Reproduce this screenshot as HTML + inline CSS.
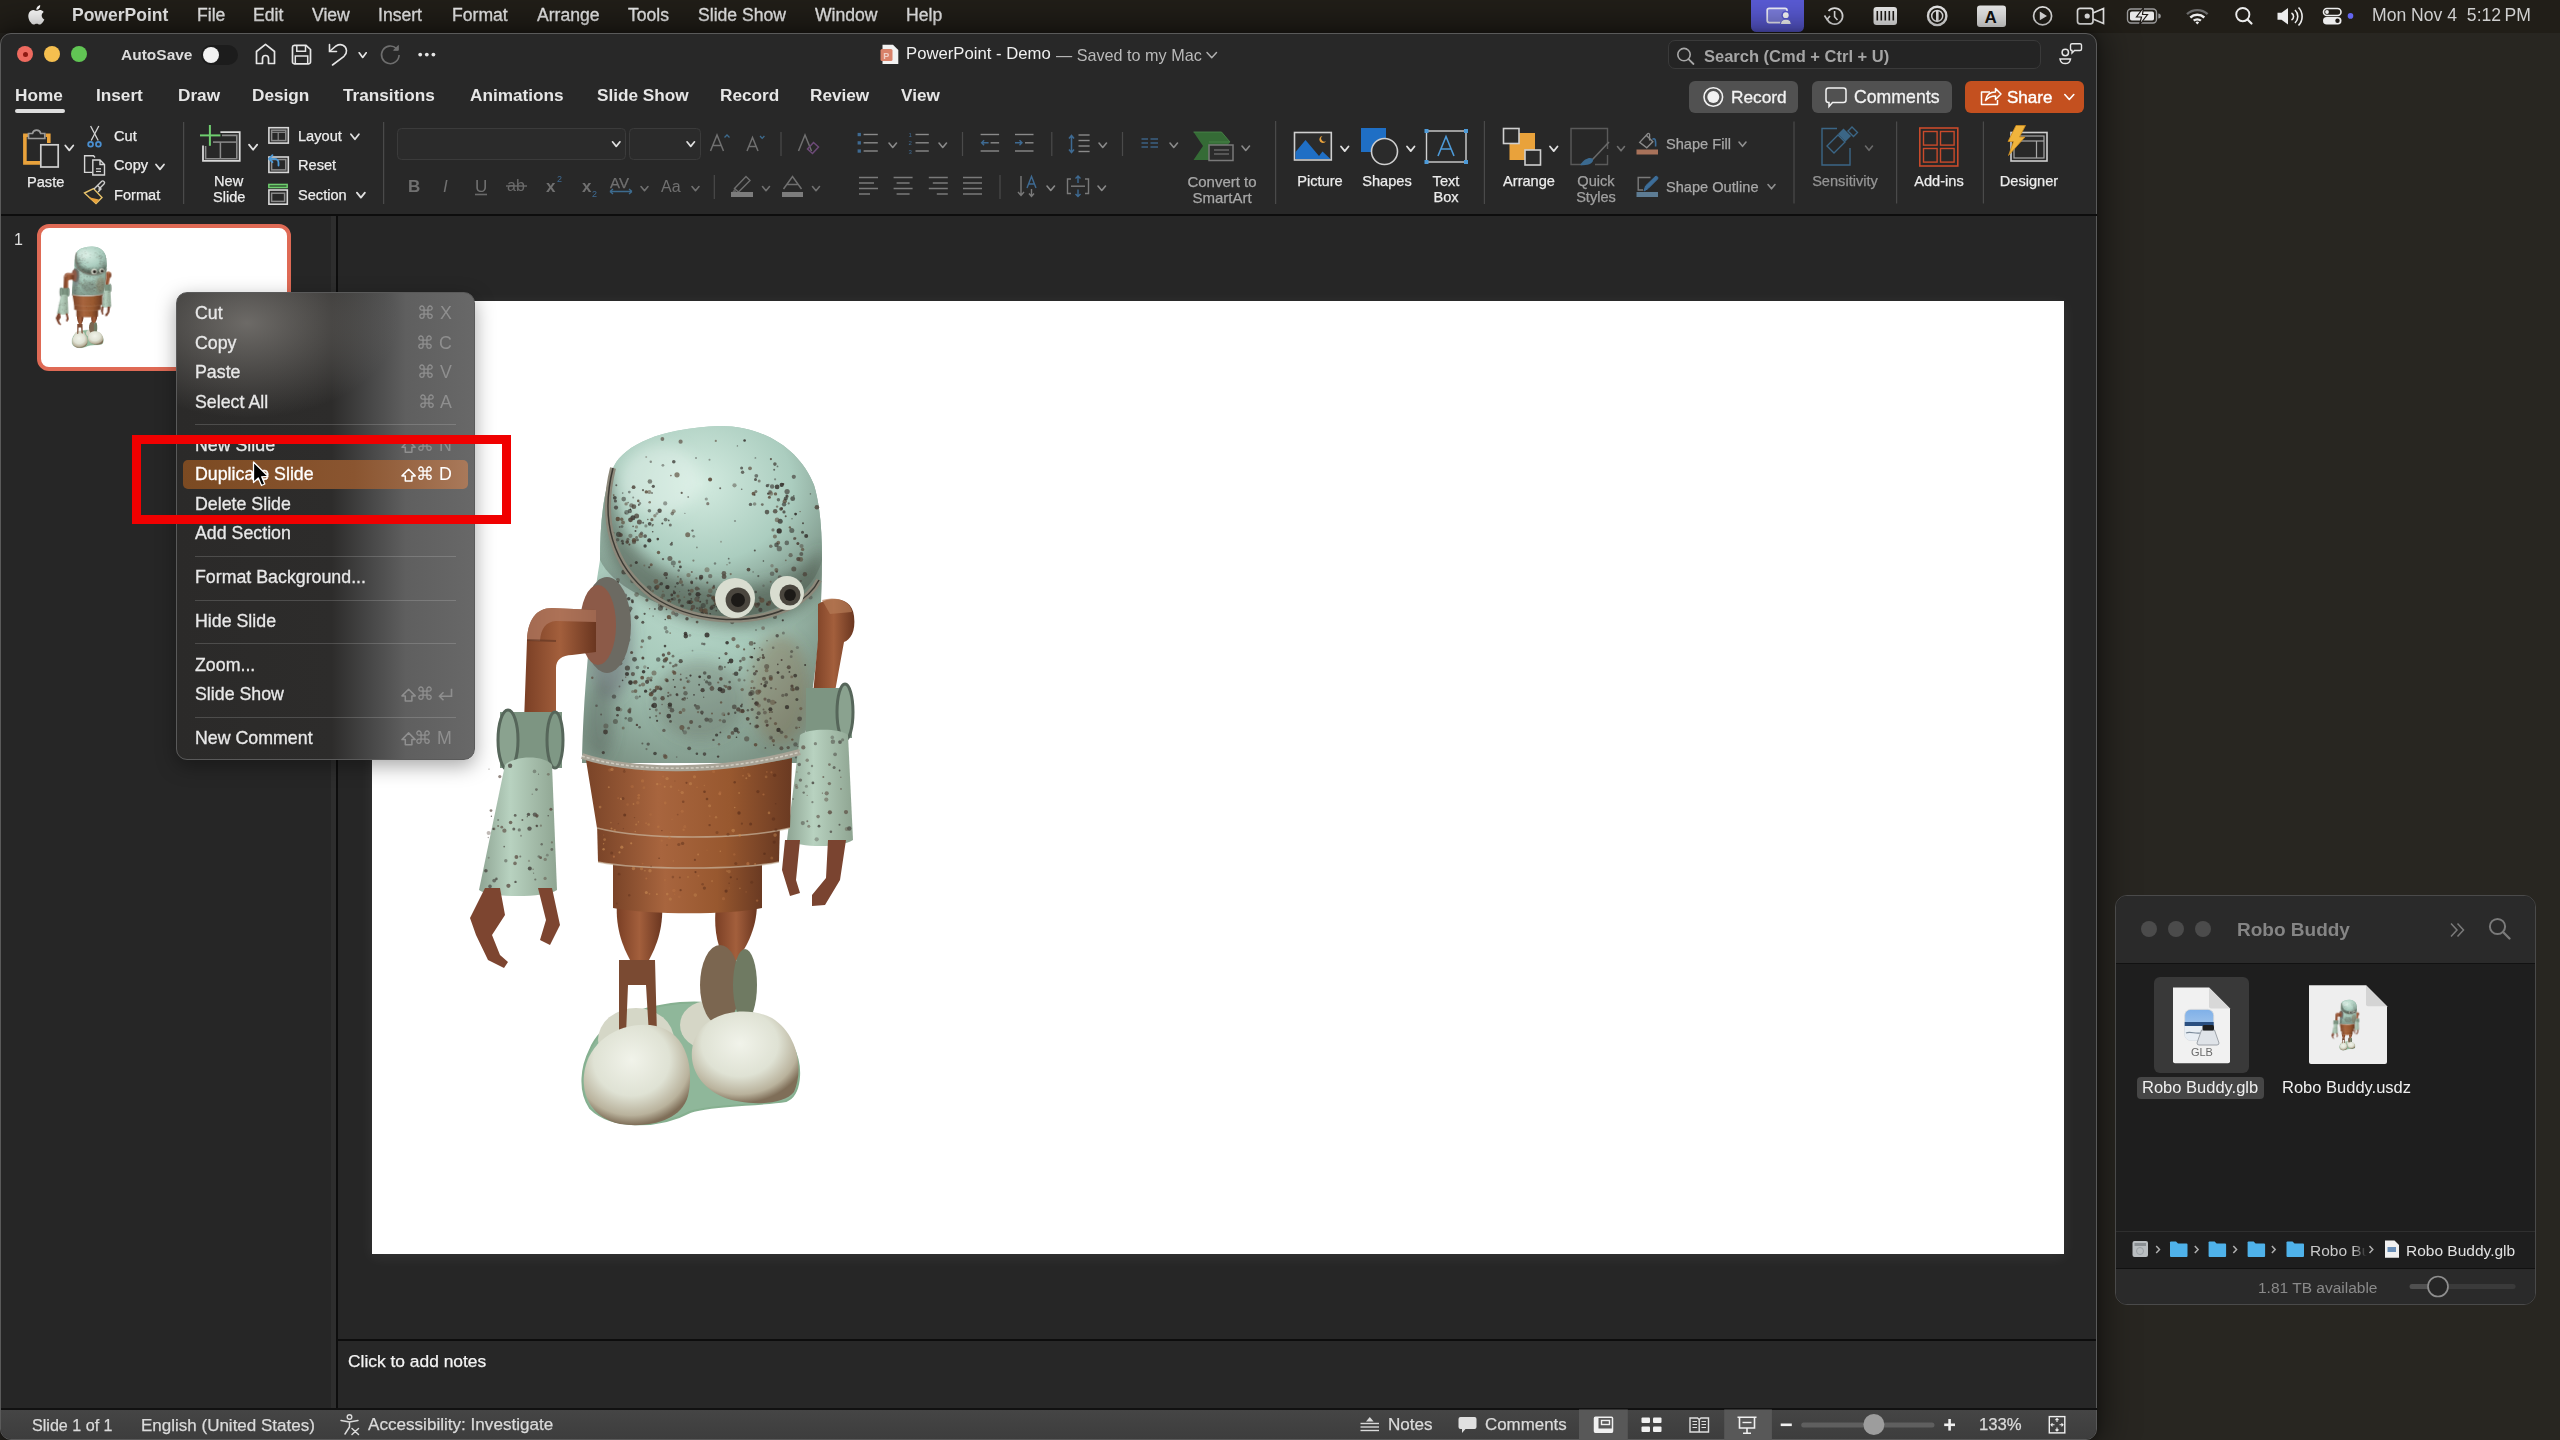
<!DOCTYPE html>
<html><head><meta charset="utf-8"><style>
*{margin:0;padding:0;box-sizing:border-box}
html,body{width:2560px;height:1440px;overflow:hidden}
body{background:#282621;font-family:"Liberation Sans",sans-serif;color:#e6e6e6;position:relative}
.a{position:absolute}
.t{position:absolute;white-space:nowrap;line-height:1;-webkit-font-smoothing:antialiased;will-change:transform}
svg{overflow:visible}
.m{-webkit-text-stroke:0.25px currentColor}
</style></head><body>
<div class="a" style="left:0px;top:0px;width:2560px;height:33px;background:#211e18"></div>
<svg class="a" style="left:0;top:0" width="2560" height="40" viewBox="0 0 2560 40"><path d="M1751 0 H1804 V26.5 A5.5 5.5 0 0 1 1798.5 32 H1756.5 A5.5 5.5 0 0 1 1751 26.5 Z" fill="#5a5bd6"/><rect x="1767.2" y="8.3" width="19.8" height="14.3" rx="2" fill="#7e7fe0" stroke="#f4f4ff" stroke-width="1.7"/><circle cx="1785.8" cy="15.2" r="4.4" fill="#5a5bd6"/><circle cx="1785.8" cy="15.2" r="2.9" fill="#ffffff"/><path d="M1780.5 24.5 C1780.5 20.5 1783 19.3 1785.8 19.3 C1788.6 19.3 1791.2 20.5 1791.2 24.5 Z" fill="#ffffff" stroke="#5a5bd6" stroke-width="1"/><path d="M1827 18.5 A8 8 0 1 0 1828.5 11" fill="none" stroke="#e8e8e8" stroke-width="1.7"/><path d="M1824.5 15.5 L1827 19.5 L1830 16" fill="none" stroke="#e8e8e8" stroke-width="1.6"/><path d="M1834.6 11 V16.8 L1837.5 20" fill="none" stroke="#e8e8e8" stroke-width="1.6"/><rect x="1873.5" y="7" width="23.5" height="18" rx="3" fill="#ececec"/><rect x="1876.5" y="11" width="1.6" height="9.5" fill="#1c1814"/><rect x="1880.5" y="11" width="1.6" height="9.5" fill="#1c1814"/><rect x="1884.5" y="11" width="1.6" height="9.5" fill="#1c1814"/><rect x="1888.5" y="11" width="1.6" height="9.5" fill="#1c1814"/><rect x="1892.5" y="11" width="1.6" height="9.5" fill="#1c1814"/><circle cx="1937.2" cy="15.9" r="9.2" fill="none" stroke="#ececec" stroke-width="2.4"/><circle cx="1937.2" cy="15.9" r="5.5" fill="none" stroke="#ececec" stroke-width="1.5"/><rect x="1936" y="11" width="2.6" height="10" fill="#ececec"/><rect x="1977" y="5.5" width="29" height="21.5" rx="3" fill="#ececec"/><text x="1984.5" y="23.3" font-size="17" font-weight="bold" fill="#111" font-family="Liberation Sans">A</text><circle cx="2042.6" cy="15.9" r="9" fill="none" stroke="#e8e8e8" stroke-width="1.7"/><path d="M2039.8 11.5 V20.3 L2047 15.9 Z" fill="#e8e8e8"/><rect x="2077.5" y="8.3" width="15.5" height="15.5" rx="2.5" fill="none" stroke="#e8e8e8" stroke-width="1.7"/><circle cx="2087.2" cy="16" r="2.6" fill="#e8e8e8"/><path d="M2093 13 L2103.5 8.5 V23.5 L2093 19" fill="none" stroke="#e8e8e8" stroke-width="1.7"/><rect x="2127.5" y="9" width="29" height="14" rx="3.5" fill="none" stroke="#9a9a9a" stroke-width="1.4"/><rect x="2130" y="11.5" width="24" height="9" rx="1.8" fill="#e8e8e8"/><path d="M2158.3 13.5 A2.5 2.5 0 0 1 2158.3 18.5" fill="#9a9a9a"/><path d="M2143.5 7.5 L2136.5 17 H2141.5 L2139.5 25 L2147.5 14.5 H2142.5 Z" fill="#e8e8e8" stroke="#1c1814" stroke-width="1.2"/><path d="M2187 14.2 A15 15 0 0 1 2207.6 14.2" fill="none" stroke="#6a6a6a" stroke-width="2.4"/><path d="M2190.3 17.5 A10.3 10.3 0 0 1 2204.3 17.5" fill="none" stroke="#ececec" stroke-width="2.4"/><path d="M2193.7 20.7 A5.5 5.5 0 0 1 2200.9 20.7" fill="none" stroke="#ececec" stroke-width="2.4"/><path d="M2195.5 22.5 L2197.3 24.5 L2199.1 22.5 A2.5 2.5 0 0 0 2195.5 22.5 Z" fill="#ececec"/><circle cx="2242.8" cy="14.6" r="6.6" fill="none" stroke="#ececec" stroke-width="1.9"/><path d="M2247.5 19.5 L2251.5 23.5" stroke="#ececec" stroke-width="2.2" stroke-linecap="round"/><path d="M2277.5 12.8 H2281.5 L2288 8 V24.5 L2281.5 19.7 H2277.5 Z" fill="#ececec"/><path d="M2291.5 13 A4 4 0 0 1 2291.5 20" fill="none" stroke="#ececec" stroke-width="1.6"/><path d="M2295 10 A9 9 0 0 1 2295 23" fill="none" stroke="#ececec" stroke-width="1.6"/><path d="M2298.5 7.5 A13 13 0 0 1 2298.5 25.5" fill="none" stroke="#ececec" stroke-width="1.6"/><rect x="2323.5" y="8.5" width="17.5" height="7" rx="3.5" fill="none" stroke="#ececec" stroke-width="1.6"/><circle cx="2327" cy="12" r="1.9" fill="#ececec"/><rect x="2323" y="17" width="18.5" height="7.5" rx="3.75" fill="#ececec"/><circle cx="2337.5" cy="20.75" r="2.2" fill="#1c1814"/><circle cx="2350.5" cy="15.9" r="2.8" fill="#6366f1"/><path transform="translate(27.5,4.5) scale(0.95)" fill="#ffffff" d="M14.9 11.7c0-2.6 2.1-3.8 2.2-3.9-1.2-1.8-3.100-2-3.700-2.100-1.600-.200-3.100.900-3.900.900-.800 0-2.100-.900-3.400-.900-1.800 0-3.400 1-4.300 2.600C-.100 11.500 1.200 15.900 3 18.500c.900 1.200 1.900 2.600 3.300 2.600 1.300-.100 1.800-.900 3.400-.900 1.600 0 2 .900 3.400.800 1.400 0 2.300-1.300 3.200-2.500 1-1.400 1.400-2.800 1.400-2.900 0 0-2.700-1-2.800-4.100zM12.300 4.100c.700-.900 1.200-2.100 1.100-3.300-1 0-2.300.700-3 1.600-.700.800-1.300 2-1.100 3.200 1.100.100 2.300-.600 3-1.500z"/></svg>
<div class="t " style="left:72px;top:6.62px;font-size:17.5px;color:#f2f2f2;font-weight:bold;">PowerPoint</div>
<div class="t " style="left:197px;top:6.54px;font-size:17.6px;color:#ececec;-webkit-text-stroke:0.3px #ececec">File</div>
<div class="t " style="left:253px;top:6.54px;font-size:17.6px;color:#ececec;-webkit-text-stroke:0.3px #ececec">Edit</div>
<div class="t " style="left:312px;top:6.54px;font-size:17.6px;color:#ececec;-webkit-text-stroke:0.3px #ececec">View</div>
<div class="t " style="left:378px;top:6.54px;font-size:17.6px;color:#ececec;-webkit-text-stroke:0.3px #ececec">Insert</div>
<div class="t " style="left:452px;top:6.54px;font-size:17.6px;color:#ececec;-webkit-text-stroke:0.3px #ececec">Format</div>
<div class="t " style="left:537px;top:6.54px;font-size:17.6px;color:#ececec;-webkit-text-stroke:0.3px #ececec">Arrange</div>
<div class="t " style="left:628px;top:6.54px;font-size:17.6px;color:#ececec;-webkit-text-stroke:0.3px #ececec">Tools</div>
<div class="t " style="left:698px;top:6.54px;font-size:17.6px;color:#ececec;-webkit-text-stroke:0.3px #ececec">Slide Show</div>
<div class="t " style="left:815px;top:6.54px;font-size:17.6px;color:#ececec;-webkit-text-stroke:0.3px #ececec">Window</div>
<div class="t " style="left:906px;top:6.54px;font-size:17.6px;color:#ececec;-webkit-text-stroke:0.3px #ececec">Help</div>
<div class="t " style="left:2372px;top:6.54px;font-size:17.6px;color:#cfcfcf;">Mon Nov 4&nbsp;&nbsp;5:12&thinsp;PM</div>
<div class="a" style="left:0px;top:33px;width:2097px;height:1407px;background:#282828;border:1px solid #5a5a5a;border-radius:11px;box-shadow:0 0 34px 6px rgba(0,0,0,.5), 0 0 8px rgba(0,0,0,.3)"></div>
<div class="a" style="left:17px;top:46px;width:16px;height:16px;background:#ee6a5f;border-radius:50%;"></div>
<div class="a" style="left:44px;top:46px;width:16px;height:16px;background:#f5bf4f;border-radius:50%;"></div>
<div class="a" style="left:71px;top:46px;width:16px;height:16px;background:#61c554;border-radius:50%;"></div>
<div class="a" style="left:23px;top:52px;width:5px;height:5px;background:#8f1a12;border-radius:50%"></div>
<div class="t " style="left:121px;top:47.33px;font-size:15.5px;color:#dcdcdc;font-weight:bold;">AutoSave</div>
<div class="a" style="left:201px;top:45px;width:37px;height:20px;background:#1c1c1c;border-radius:10px;"></div>
<div class="a" style="left:203px;top:47px;width:16px;height:16px;background:#f2f2f2;border-radius:50%"></div>
<div class="t " style="left:15px;top:86.88px;font-size:17.2px;color:#e6e6e6;font-weight:bold;">Home</div>
<div class="t " style="left:96px;top:86.88px;font-size:17.2px;color:#e6e6e6;font-weight:bold;">Insert</div>
<div class="t " style="left:177.5px;top:86.88px;font-size:17.2px;color:#e6e6e6;font-weight:bold;">Draw</div>
<div class="t " style="left:252px;top:86.88px;font-size:17.2px;color:#e6e6e6;font-weight:bold;">Design</div>
<div class="t " style="left:343px;top:86.88px;font-size:17.2px;color:#e6e6e6;font-weight:bold;">Transitions</div>
<div class="t " style="left:470px;top:86.88px;font-size:17.2px;color:#e6e6e6;font-weight:bold;">Animations</div>
<div class="t " style="left:596.5px;top:86.88px;font-size:17.2px;color:#e6e6e6;font-weight:bold;">Slide Show</div>
<div class="t " style="left:719.5px;top:86.88px;font-size:17.2px;color:#e6e6e6;font-weight:bold;">Record</div>
<div class="t " style="left:810px;top:86.88px;font-size:17.2px;color:#e6e6e6;font-weight:bold;">Review</div>
<div class="t " style="left:900.5px;top:86.88px;font-size:17.2px;color:#e6e6e6;font-weight:bold;">View</div>
<div class="a" style="left:15px;top:109px;width:50px;height:4px;background:#dedede;border-radius:2px"></div>
<svg class="a" style="left:0;top:0" width="2560" height="220" viewBox="0 0 2560 220"><path d="M24.9 135.2 V162.9 H40" fill="none" stroke="#e9a23b" stroke-width="3.6"/><path d="M23.1 135.2 H29 M45.5 135.2 H48.8 V143" fill="none" stroke="#e9a23b" stroke-width="3.6"/><path d="M28.5 138.5 V133.5 H32.5 A4.2 4.2 0 0 1 40.7 133.5 H44.8 V138.5 Z" fill="none" stroke="#9a9a9a" stroke-width="1.7"/><rect x="40.8" y="144.8" width="17.4" height="22.2" rx="0" fill="none" stroke="#cfcfcf" stroke-width="1.7"/><path d="M65.3 145.5 L69.3 150.3 L73.3 145.5" fill="none" stroke="#e0e0e0" stroke-width="1.8" stroke-linecap="round" stroke-linejoin="round"/><path d="M156 164.5 L160.0 169.3 L164 164.5" fill="none" stroke="#e0e0e0" stroke-width="1.8" stroke-linecap="round" stroke-linejoin="round"/><line x1="90.6" y1="126" x2="98.2" y2="140.5" stroke="#d6d6d6" stroke-width="1.3" stroke-linecap="butt"/><line x1="98.8" y1="126" x2="91.2" y2="140.5" stroke="#d6d6d6" stroke-width="1.3" stroke-linecap="butt"/><circle cx="90.6" cy="144.2" r="2.4" fill="none" stroke="#4a8fd0" stroke-width="1.8"/><circle cx="98.4" cy="144.2" r="2.4" fill="none" stroke="#4a8fd0" stroke-width="1.8"/><path d="M92.5 172.4 H84.6 V155.8 H93.5 L95 157.5" fill="none" stroke="#d6d6d6" stroke-width="1.4"/><path d="M92.8 160 H100 L104.5 164.5 V175 H92.8 Z M100 160 V164.5 H104.5" fill="none" stroke="#d6d6d6" stroke-width="1.4"/><line x1="96" y1="168.8" x2="101" y2="168.8" stroke="#d6d6d6" stroke-width="1.2" stroke-linecap="butt"/><line x1="96" y1="171.5" x2="101" y2="171.5" stroke="#d6d6d6" stroke-width="1.2" stroke-linecap="butt"/><path d="M84.5 193 L93.5 188.5 L102 197.5 L96 203.5 Z" fill="none" stroke="#e8c46c" stroke-width="1.4"/><path d="M88 197 L99 199.5 L96 203.5 Z" fill="#e9a23b"/><path d="M94 189 L97.5 185.5 L101 189 L98 192 M96 187 L101.5 181.5 A1.5 1.5 0 0 1 104 184 L98.5 189.5" fill="none" stroke="#cfcfcf" stroke-width="1.4"/><line x1="183.6" y1="122" x2="183.6" y2="204" stroke="#4a4a4a" stroke-width="1.2" stroke-linecap="butt"/><path d="M220.4 132.1 H239.7 V160.9 H203 V145.5" fill="none" stroke="#d8d8d8" stroke-width="1.8"/><path d="M222 135.4 H236.8 V158.7 H205.6 V146" fill="none" stroke="#8c8c8c" stroke-width="1.6"/><line x1="213" y1="142.1" x2="236" y2="142.1" stroke="#8c8c8c" stroke-width="1.5" stroke-linecap="butt"/><line x1="220.4" y1="142.1" x2="220.4" y2="158" stroke="#8c8c8c" stroke-width="1.5" stroke-linecap="butt"/><line x1="209.9" y1="125" x2="209.9" y2="145.8" stroke="#6fcf6f" stroke-width="2" stroke-linecap="butt"/><line x1="200" y1="135.4" x2="220.4" y2="135.4" stroke="#6fcf6f" stroke-width="2" stroke-linecap="butt"/><path d="M249 144.6 L253.1 149.79999999999998 L257.2 144.6" fill="none" stroke="#e0e0e0" stroke-width="1.8" stroke-linecap="round" stroke-linejoin="round"/><rect x="268.9" y="127.7" width="19.4" height="15.4" rx="0" fill="none" stroke="#d8d8d8" stroke-width="1.6"/><rect x="271.6" y="130.2" width="14.2" height="10.4" rx="0" fill="none" stroke="#8c8c8c" stroke-width="1.5"/><line x1="271.6" y1="132.3" x2="285.8" y2="132.3" stroke="#8c8c8c" stroke-width="1.2" stroke-linecap="butt"/><line x1="278.2" y1="132.3" x2="278.2" y2="140.6" stroke="#8c8c8c" stroke-width="1.2" stroke-linecap="butt"/><path d="M350.9 134.3 L354.9 139.3 L358.9 134.3" fill="none" stroke="#e0e0e0" stroke-width="1.8" stroke-linecap="round" stroke-linejoin="round"/><rect x="268.9" y="157" width="19.4" height="15.4" rx="0" fill="none" stroke="#d8d8d8" stroke-width="1.6"/><rect x="271.6" y="159.5" width="14.2" height="10.4" rx="0" fill="none" stroke="#8c8c8c" stroke-width="1.5"/><path d="M269 158.8 L272.5 155.2 M269 158.8 L272.5 162.2 M269 158.8 H274.5 A4 4 0 0 1 278.5 162.8 V165.5" fill="none" stroke="#4d9ad8" stroke-width="1.8" stroke-linecap="round"/><rect x="268.8" y="184.4" width="18.4" height="3.2" rx="0" fill="#3c6a3c" stroke="#6fcf6f" stroke-width="1.4"/><rect x="268.9" y="190" width="18.4" height="14.2" rx="0" fill="none" stroke="#d8d8d8" stroke-width="1.6"/><rect x="271.6" y="193.2" width="13" height="8.2" rx="0" fill="none" stroke="#8c8c8c" stroke-width="1.5"/><path d="M356.9 192.6 L360.9 197.6 L364.9 192.6" fill="none" stroke="#e0e0e0" stroke-width="1.8" stroke-linecap="round" stroke-linejoin="round"/><line x1="383.6" y1="122" x2="383.6" y2="204" stroke="#4a4a4a" stroke-width="1.2" stroke-linecap="butt"/><rect x="397.5" y="128.5" width="228" height="31" rx="4" fill="#2b2b2b" stroke="#3b3b3b" stroke-width="1"/><path d="M612.5 141.8 L616.25 146.4 L620.0 141.8" fill="none" stroke="#e0e0e0" stroke-width="1.7" stroke-linecap="round" stroke-linejoin="round"/><rect x="629.5" y="128.5" width="71" height="31" rx="4" fill="#2b2b2b" stroke="#3b3b3b" stroke-width="1"/><path d="M687 141.8 L690.75 146.4 L694.5 141.8" fill="none" stroke="#e0e0e0" stroke-width="1.7" stroke-linecap="round" stroke-linejoin="round"/><path d="M710.5 151 L717 135 L723.5 151 M712.8 145.5 H721.3" fill="none" stroke="#707070" stroke-width="1.5"/><path d="M724.5 137.5 L727 135 L729.5 137.5" fill="none" stroke="#3d6b8e" stroke-width="1.3"/><path d="M747 151 L752.5 137.5 L758 151 M749 146.5 H756" fill="none" stroke="#707070" stroke-width="1.5"/><path d="M760 136 L762.2 138.4 L764.4 136" fill="none" stroke="#3d6b8e" stroke-width="1.3"/><line x1="781" y1="132" x2="781" y2="156" stroke="#4a4a4a" stroke-width="1.2" stroke-linecap="butt"/><path d="M798.5 151 L805 135 L811.5 151" fill="none" stroke="#707070" stroke-width="1.5"/><path d="M807.5 149 L813.5 142.5 L818.5 147 L812.5 153.5 Z" fill="none" stroke="#6d4a78" stroke-width="1.5"/><line x1="714.3" y1="175" x2="714.3" y2="199" stroke="#4a4a4a" stroke-width="1.2" stroke-linecap="butt"/><path d="M734.5 188.5 L746 176.5 L750 180.5 L738.5 192 Z" fill="none" stroke="#6e6e6e" stroke-width="1.4"/><path d="M734.5 188.5 L732 192.5 L736.5 192" fill="#5e5e5e"/><rect x="731" y="192" width="22" height="5" fill="#7c7c7c"/><path d="M762.5 186.5 L766.0 190.7 L769.5 186.5" fill="none" stroke="#707070" stroke-width="1.6" stroke-linecap="round" stroke-linejoin="round"/><path d="M783.5 189 L792.5 176.5 L801.5 189 M787 184.5 H798" fill="none" stroke="#707070" stroke-width="1.5"/><rect x="782" y="192" width="21" height="5" fill="#7c7c7c"/><path d="M812.5 186.5 L816.0 190.7 L819.5 186.5" fill="none" stroke="#707070" stroke-width="1.6" stroke-linecap="round" stroke-linejoin="round"/><path d="M641 186.5 L644.5 190.7 L648 186.5" fill="none" stroke="#707070" stroke-width="1.6" stroke-linecap="round" stroke-linejoin="round"/><path d="M692 186.5 L695.5 190.7 L699 186.5" fill="none" stroke="#707070" stroke-width="1.6" stroke-linecap="round" stroke-linejoin="round"/><path d="M610 191.5 H632 M610 191.5 L613 189 M610 191.5 L613 194 M632 191.5 L629 189 M632 191.5 L629 194" fill="none" stroke="#3d6b8e" stroke-width="1.4"/><line x1="506" y1="186" x2="527" y2="186" stroke="#6a6a6a" stroke-width="1.4" stroke-linecap="butt"/><line x1="475" y1="194.5" x2="487" y2="194.5" stroke="#6a6a6a" stroke-width="1.6" stroke-linecap="butt"/><rect x="857.6" y="132.9" width="3.3" height="3.3" fill="#3e6a92"/><line x1="863.6" y1="134.5" x2="877.8000000000001" y2="134.5" stroke="#8a8a8a" stroke-width="1.4" stroke-linecap="butt"/><rect x="857.6" y="141.20000000000002" width="3.3" height="3.3" fill="#3e6a92"/><line x1="863.6" y1="142.8" x2="877.8000000000001" y2="142.8" stroke="#8a8a8a" stroke-width="1.4" stroke-linecap="butt"/><rect x="857.6" y="149.4" width="3.3" height="3.3" fill="#3e6a92"/><line x1="863.6" y1="151" x2="877.8000000000001" y2="151" stroke="#8a8a8a" stroke-width="1.4" stroke-linecap="butt"/><path d="M889 143 L892.75 147.5 L896.5 143" fill="none" stroke="#8a8a8a" stroke-width="1.6" stroke-linecap="round" stroke-linejoin="round"/><line x1="915.5" y1="134.5" x2="928.8" y2="134.5" stroke="#8a8a8a" stroke-width="1.4" stroke-linecap="butt"/><line x1="915.5" y1="142.8" x2="928.8" y2="142.8" stroke="#8a8a8a" stroke-width="1.4" stroke-linecap="butt"/><line x1="915.5" y1="151" x2="928.8" y2="151" stroke="#8a8a8a" stroke-width="1.4" stroke-linecap="butt"/><text x="908.5" y="137" font-size="6" fill="#3e6a92" font-family="Liberation Sans">1</text><text x="908.5" y="145" font-size="6" fill="#3e6a92" font-family="Liberation Sans">2</text><text x="908.5" y="153.5" font-size="6" fill="#3e6a92" font-family="Liberation Sans">3</text><path d="M939 143 L942.75 147.5 L946.5 143" fill="none" stroke="#8a8a8a" stroke-width="1.6" stroke-linecap="round" stroke-linejoin="round"/><line x1="962.5" y1="132" x2="962.5" y2="156" stroke="#4a4a4a" stroke-width="1.2" stroke-linecap="butt"/><line x1="980.6" y1="134.5" x2="999.1" y2="134.5" stroke="#8a8a8a" stroke-width="1.4" stroke-linecap="butt"/><line x1="990.6" y1="142.8" x2="999.1" y2="142.8" stroke="#8a8a8a" stroke-width="1.4" stroke-linecap="butt"/><line x1="980.6" y1="151" x2="999.1" y2="151" stroke="#8a8a8a" stroke-width="1.4" stroke-linecap="butt"/><path d="M988.6 142.8 H981.6 M984.1 140.3 L981.6 142.8 L984.1 145.3" fill="none" stroke="#3e6a92" stroke-width="1.4"/><line x1="1015" y1="134.5" x2="1033.5" y2="134.5" stroke="#8a8a8a" stroke-width="1.4" stroke-linecap="butt"/><line x1="1025" y1="142.8" x2="1033.5" y2="142.8" stroke="#8a8a8a" stroke-width="1.4" stroke-linecap="butt"/><line x1="1015" y1="151" x2="1033.5" y2="151" stroke="#8a8a8a" stroke-width="1.4" stroke-linecap="butt"/><path d="M1015 142.8 H1022 M1019.5 140.3 L1022 142.8 L1019.5 145.3" fill="none" stroke="#3e6a92" stroke-width="1.4"/><line x1="1051.8" y1="132" x2="1051.8" y2="156" stroke="#4a4a4a" stroke-width="1.2" stroke-linecap="butt"/><path d="M1071.5 136 V152 M1069 138.5 L1071.5 135.5 L1074 138.5 M1069 149.5 L1071.5 152.5 L1074 149.5" fill="none" stroke="#3e6a92" stroke-width="1.5"/><line x1="1078.5" y1="135" x2="1089.6" y2="135" stroke="#8a8a8a" stroke-width="1.4" stroke-linecap="butt"/><line x1="1078.5" y1="140.5" x2="1089.6" y2="140.5" stroke="#8a8a8a" stroke-width="1.4" stroke-linecap="butt"/><line x1="1078.5" y1="146" x2="1089.6" y2="146" stroke="#8a8a8a" stroke-width="1.4" stroke-linecap="butt"/><line x1="1078.5" y1="151.5" x2="1089.6" y2="151.5" stroke="#8a8a8a" stroke-width="1.4" stroke-linecap="butt"/><path d="M1099 143 L1102.75 147.5 L1106.5 143" fill="none" stroke="#8a8a8a" stroke-width="1.6" stroke-linecap="round" stroke-linejoin="round"/><line x1="1122.5" y1="132" x2="1122.5" y2="156" stroke="#4a4a4a" stroke-width="1.2" stroke-linecap="butt"/><line x1="1141.5" y1="139" x2="1148" y2="139" stroke="#3e6a92" stroke-width="1.3" stroke-linecap="butt"/><line x1="1150.5" y1="139" x2="1158" y2="139" stroke="#3e6a92" stroke-width="1.3" stroke-linecap="butt"/><line x1="1141.5" y1="143" x2="1148" y2="143" stroke="#3e6a92" stroke-width="1.3" stroke-linecap="butt"/><line x1="1150.5" y1="143" x2="1158" y2="143" stroke="#3e6a92" stroke-width="1.3" stroke-linecap="butt"/><line x1="1141.5" y1="147" x2="1148" y2="147" stroke="#3e6a92" stroke-width="1.3" stroke-linecap="butt"/><line x1="1150.5" y1="147" x2="1158" y2="147" stroke="#3e6a92" stroke-width="1.3" stroke-linecap="butt"/><path d="M1170 143 L1173.75 147.5 L1177.5 143" fill="none" stroke="#8a8a8a" stroke-width="1.6" stroke-linecap="round" stroke-linejoin="round"/><path d="M1193.5 132 H1221.5 L1230 142 L1228 145 H1209 V160 L1204 160 L1193.5 160 L1203 146 Z" fill="#356b36"/><path d="M1193.5 132 H1221.5 L1230 142 H1209" fill="none" stroke="#4b8a4b" stroke-width="0.8"/><rect x="1209" y="145" width="24" height="15.5" rx="0" fill="#2b2b2b" stroke="#7a7a7a" stroke-width="1.5"/><line x1="1214" y1="150" x2="1229" y2="150" stroke="#7a7a7a" stroke-width="1.1" stroke-linecap="butt"/><line x1="1214" y1="154" x2="1229" y2="154" stroke="#7a7a7a" stroke-width="1.1" stroke-linecap="butt"/><path d="M1242 146 L1245.75 150.5 L1249.5 146" fill="none" stroke="#8a8a8a" stroke-width="1.6" stroke-linecap="round" stroke-linejoin="round"/><line x1="1275.6" y1="121" x2="1275.6" y2="204" stroke="#4a4a4a" stroke-width="1.2" stroke-linecap="butt"/><line x1="859" y1="177.5" x2="878" y2="177.5" stroke="#7a7a7a" stroke-width="1.5" stroke-linecap="butt"/><line x1="859" y1="183" x2="874" y2="183" stroke="#7a7a7a" stroke-width="1.5" stroke-linecap="butt"/><line x1="859" y1="188.5" x2="878" y2="188.5" stroke="#7a7a7a" stroke-width="1.5" stroke-linecap="butt"/><line x1="859" y1="194" x2="870" y2="194" stroke="#7a7a7a" stroke-width="1.5" stroke-linecap="butt"/><line x1="893.6" y1="177.5" x2="912.6" y2="177.5" stroke="#7a7a7a" stroke-width="1.5" stroke-linecap="butt"/><line x1="896.6" y1="183" x2="909.6" y2="183" stroke="#7a7a7a" stroke-width="1.5" stroke-linecap="butt"/><line x1="893.6" y1="188.5" x2="912.6" y2="188.5" stroke="#7a7a7a" stroke-width="1.5" stroke-linecap="butt"/><line x1="896.6" y1="194" x2="909.6" y2="194" stroke="#7a7a7a" stroke-width="1.5" stroke-linecap="butt"/><line x1="928.8" y1="177.5" x2="947.8" y2="177.5" stroke="#7a7a7a" stroke-width="1.5" stroke-linecap="butt"/><line x1="932.8" y1="183" x2="947.8" y2="183" stroke="#7a7a7a" stroke-width="1.5" stroke-linecap="butt"/><line x1="928.8" y1="188.5" x2="947.8" y2="188.5" stroke="#7a7a7a" stroke-width="1.5" stroke-linecap="butt"/><line x1="936.8" y1="194" x2="947.8" y2="194" stroke="#7a7a7a" stroke-width="1.5" stroke-linecap="butt"/><line x1="963" y1="177.5" x2="982" y2="177.5" stroke="#7a7a7a" stroke-width="1.5" stroke-linecap="butt"/><line x1="963" y1="183" x2="982" y2="183" stroke="#7a7a7a" stroke-width="1.5" stroke-linecap="butt"/><line x1="963" y1="188.5" x2="982" y2="188.5" stroke="#7a7a7a" stroke-width="1.5" stroke-linecap="butt"/><line x1="963" y1="194" x2="982" y2="194" stroke="#7a7a7a" stroke-width="1.5" stroke-linecap="butt"/><line x1="1000" y1="175" x2="1000" y2="199" stroke="#4a4a4a" stroke-width="1.2" stroke-linecap="butt"/><path d="M1021 176 V195 M1018 192 L1021 195.5 L1024 192" fill="none" stroke="#7a7a7a" stroke-width="1.4"/><path d="M1027 188 L1031.5 176.5 L1036 188 M1028.5 184 H1034.5" fill="none" stroke="#3e6a92" stroke-width="1.4"/><path d="M1031.5 189 V196 M1029 193.5 L1031.5 196.5 L1034 193.5" fill="none" stroke="#7a7a7a" stroke-width="1.4"/><path d="M1047 186 L1050.75 190.5 L1054.5 186" fill="none" stroke="#8a8a8a" stroke-width="1.6" stroke-linecap="round" stroke-linejoin="round"/><path d="M1071 179 H1067.5 V193.5 H1071 M1085 179 H1088.5 V193.5 H1085" fill="none" stroke="#7a7a7a" stroke-width="1.4"/><line x1="1071" y1="186.2" x2="1085" y2="186.2" stroke="#7a7a7a" stroke-width="1.4" stroke-linecap="butt"/><path d="M1078 176 V183 M1075.5 178.5 L1078 176 L1080.5 178.5 M1078 189.5 V196.5 M1075.5 194 L1078 196.5 L1080.5 194" fill="none" stroke="#3e6a92" stroke-width="1.4"/><path d="M1098 186 L1101.75 190.5 L1105.5 186" fill="none" stroke="#8a8a8a" stroke-width="1.6" stroke-linecap="round" stroke-linejoin="round"/><rect x="1294.5" y="132.5" width="36.8" height="27.5" rx="0" fill="#2b2b2b" stroke="#cfcfcf" stroke-width="1.6"/><path d="M1295.5 159 V152 L1305.5 140 L1319 156 L1322.5 151.5 L1330.5 159 Z" fill="#1f6fc5"/><path d="M1322.5 136 A3.5 3.5 0 1 0 1326 141 A3 3 0 0 1 1322.5 136 Z" fill="#e9a23b"/><path d="M1341 146.5 L1344.75 151.1 L1348.5 146.5" fill="none" stroke="#e0e0e0" stroke-width="1.8" stroke-linecap="round" stroke-linejoin="round"/><rect x="1361" y="128" width="25" height="24" fill="#1f6fc5"/><circle cx="1384.5" cy="151.5" r="13" fill="#2b2b2b" stroke="#cfcfcf" stroke-width="1.6"/><path d="M1407 146.5 L1410.75 151.1 L1414.5 146.5" fill="none" stroke="#e0e0e0" stroke-width="1.8" stroke-linecap="round" stroke-linejoin="round"/><rect x="1426.5" y="131" width="39.5" height="31" rx="0" fill="none" stroke="#cfcfcf" stroke-width="1.4"/><rect x="1424.5" y="129" width="4" height="4" fill="#4d9ad8"/><rect x="1464" y="129" width="4" height="4" fill="#4d9ad8"/><rect x="1424.5" y="160" width="4" height="4" fill="#4d9ad8"/><rect x="1464" y="160" width="4" height="4" fill="#4d9ad8"/><path d="M1438 156 L1446 136.5 L1454 156 M1441 149 H1451" fill="none" stroke="#4d9ad8" stroke-width="1.6"/><line x1="1484.4" y1="121" x2="1484.4" y2="204" stroke="#4a4a4a" stroke-width="1.2" stroke-linecap="butt"/><rect x="1509.5" y="133" width="25.5" height="27" fill="#e9a23b"/><rect x="1503.5" y="128.5" width="15.5" height="15" rx="0" fill="#2b2b2b" stroke="#cfcfcf" stroke-width="1.6"/><rect x="1525" y="150" width="15.5" height="15" rx="0" fill="#2b2b2b" stroke="#cfcfcf" stroke-width="1.6"/><path d="M1550 146.5 L1553.75 151.1 L1557.5 146.5" fill="none" stroke="#e0e0e0" stroke-width="1.8" stroke-linecap="round" stroke-linejoin="round"/><path d="M1571 149 V128.5 H1607.5 V149 M1571 149 V164.5 H1582" fill="none" stroke="#5a5a5a" stroke-width="1.4"/><path d="M1607.5 155 V164.5 H1595" fill="none" stroke="#5a5a5a" stroke-width="1.4"/><path d="M1609 142 L1592 160" stroke="#6a6a6a" stroke-width="1.6"/><path d="M1580 165 C1585 158 1590 157 1593 159 C1594 163 1588 166 1580 165Z" fill="#3b6a90"/><path d="M1617.5 146.5 L1621.0 150.8 L1624.5 146.5" fill="none" stroke="#707070" stroke-width="1.6" stroke-linecap="round" stroke-linejoin="round"/><path d="M1639.7 142.4 L1646.3 135.2 L1652.8 141.8 L1646.8 147.8 Z" fill="none" stroke="#8a8a8a" stroke-width="1.4"/><path d="M1646.3 135.2 L1647.8 133.6 A1.2 1.2 0 0 1 1649.6 134.3 V140.5" fill="none" stroke="#8a8a8a" stroke-width="1.3"/><path d="M1652.5 139.5 C1654.5 137.5 1656 139 1655.6 146.5" fill="none" stroke="#3d6e9a" stroke-width="1.6"/><rect x="1636.5" y="149.5" width="21.5" height="5" fill="#a8725a"/><path d="M1739 142 L1742.5 146.3 L1746 142" fill="none" stroke="#909090" stroke-width="1.6" stroke-linecap="round" stroke-linejoin="round"/><path d="M1643 190 H1638.2 V177.5 H1650.5" fill="none" stroke="#7a7a7a" stroke-width="1.4"/><path d="M1644 191 L1645.5 186 L1655 176.8 A1.6 1.6 0 0 1 1657.4 179.2 L1648 188.6 Z" fill="#3d6e9a" stroke="#3d6e9a" stroke-width="1"/><rect x="1636.5" y="192" width="21.5" height="5" fill="#5d7c94"/><path d="M1768 184.5 L1771.5 188.8 L1775 184.5" fill="none" stroke="#909090" stroke-width="1.6" stroke-linecap="round" stroke-linejoin="round"/><line x1="1794" y1="121.5" x2="1794" y2="203.5" stroke="#4a4a4a" stroke-width="1.2" stroke-linecap="butt"/><path d="M1837 128.5 H1822 V165 H1850 V148" fill="none" stroke="#3b6686" stroke-width="1.4"/><path d="M1827 146 L1838 135 L1845 142 L1834 153 Z" fill="none" stroke="#3b6686" stroke-width="1.4"/><path d="M1838 134 L1843.5 128.5 L1851 136 L1845.5 141.5 Z" fill="#3b6686"/><path d="M1848 131 L1852 127 L1857.5 132.5 L1853.5 136.5 Z" fill="none" stroke="#3b6686" stroke-width="1.4"/><path d="M1865.5 146 L1869.0 150.3 L1872.5 146" fill="none" stroke="#6a6a6a" stroke-width="1.6" stroke-linecap="round" stroke-linejoin="round"/><line x1="1896.6" y1="121.5" x2="1896.6" y2="203.5" stroke="#4a4a4a" stroke-width="1.2" stroke-linecap="butt"/><rect x="1919.8" y="128" width="38" height="38" rx="0" fill="none" stroke="#c94a2b" stroke-width="1.6"/><rect x="1923.5" y="131.5" width="13.6" height="13.6" rx="0" fill="none" stroke="#c94a2b" stroke-width="1.4"/><rect x="1940.5" y="131.5" width="13.6" height="13.6" rx="0" fill="none" stroke="#c94a2b" stroke-width="1.4"/><rect x="1923.5" y="148.5" width="13.6" height="13.6" rx="0" fill="none" stroke="#c94a2b" stroke-width="1.4"/><rect x="1940.5" y="148.5" width="13.6" height="13.6" rx="0" fill="none" stroke="#c94a2b" stroke-width="1.4"/><line x1="1983.4" y1="121.5" x2="1983.4" y2="203.5" stroke="#4a4a4a" stroke-width="1.2" stroke-linecap="butt"/><rect x="2011" y="132.5" width="36" height="28.5" rx="0" fill="none" stroke="#cfcfcf" stroke-width="1.6"/><rect x="2014" y="136" width="30" height="22" rx="0" fill="none" stroke="#a8a8a8" stroke-width="1.2"/><line x1="2014" y1="141" x2="2044" y2="141" stroke="#a8a8a8" stroke-width="1.2" stroke-linecap="butt"/><line x1="2036.5" y1="141" x2="2036.5" y2="158" stroke="#a8a8a8" stroke-width="1.2" stroke-linecap="butt"/><path d="M2016 125.5 H2025.5 L2019.5 137 H2025 L2008.5 155.5 L2013.5 141.5 H2008 Z" fill="#f0b43c" stroke="#c98a20" stroke-width="0.8"/></svg>
<div class="t m" style="left:27px;top:174.59px;font-size:14.6px;color:#ececec;">Paste</div>
<div class="t m" style="left:113.7px;top:128.89px;font-size:14.6px;color:#ececec;">Cut</div>
<div class="t m" style="left:113.7px;top:158.19px;font-size:14.6px;color:#ececec;">Copy</div>
<div class="t m" style="left:113.7px;top:187.89px;font-size:14.6px;color:#ececec;">Format</div>
<div class="t m" style="left:214.2px;top:174.39px;font-size:14.6px;color:#ececec;">New</div>
<div class="t m" style="left:212.5px;top:190.09px;font-size:14.6px;color:#ececec;">Slide</div>
<div class="t m" style="left:297.7px;top:128.89px;font-size:14.6px;color:#ececec;">Layout</div>
<div class="t m" style="left:297.7px;top:158.19px;font-size:14.6px;color:#ececec;">Reset</div>
<div class="t m" style="left:297.7px;top:187.89px;font-size:14.6px;color:#ececec;">Section</div>
<div class="t " style="left:407.5px;top:178.05px;font-size:17px;color:#707070;font-weight:bold;">B</div>
<div class="t " style="left:443px;top:178.05px;font-size:17px;color:#707070;"><i>I</i></div>
<div class="t " style="left:475px;top:178.05px;font-size:17px;color:#707070;">U</div>
<div class="t " style="left:506.5px;top:178.40px;font-size:16px;color:#6a6a6a;">ab</div>
<div class="t " style="left:546px;top:178.05px;font-size:17px;color:#707070;font-weight:bold;">x</div>
<div class="t " style="left:557px;top:175.35px;font-size:9px;color:#3e6a92;">2</div>
<div class="t " style="left:582px;top:178.05px;font-size:17px;color:#707070;font-weight:bold;">x</div>
<div class="t " style="left:592px;top:190.35px;font-size:9px;color:#3e6a92;">2</div>
<div class="t m" style="left:609.5px;top:174.75px;font-size:15px;color:#707070;">AV</div>
<div class="t " style="left:661px;top:179.40px;font-size:16px;color:#707070;">Aa</div>
<div class="t m" style="left:922.2px;width:600px;text-align:center;top:173.95px;font-size:15px;color:#a8a8a8;">Convert to</div>
<div class="t m" style="left:922.2px;width:600px;text-align:center;top:189.65px;font-size:15px;color:#a8a8a8;">SmartArt</div>
<div class="t m" style="left:1020px;width:600px;text-align:center;top:174.29px;font-size:14.6px;color:#ececec;">Picture</div>
<div class="t m" style="left:1086.6px;width:600px;text-align:center;top:174.29px;font-size:14.6px;color:#ececec;">Shapes</div>
<div class="t m" style="left:1145.5px;width:600px;text-align:center;top:174.29px;font-size:14.6px;color:#ececec;">Text</div>
<div class="t m" style="left:1145.5px;width:600px;text-align:center;top:189.99px;font-size:14.6px;color:#ececec;">Box</div>
<div class="t m" style="left:1228.7px;width:600px;text-align:center;top:174.29px;font-size:14.6px;color:#ececec;">Arrange</div>
<div class="t m" style="left:1295.5px;width:600px;text-align:center;top:174.29px;font-size:14.6px;color:#a0a0a0;">Quick</div>
<div class="t m" style="left:1295.5px;width:600px;text-align:center;top:189.99px;font-size:14.6px;color:#a0a0a0;">Styles</div>
<div class="t m" style="left:1666px;top:136.89px;font-size:14.6px;color:#a8a8a8;">Shape Fill</div>
<div class="t m" style="left:1666px;top:179.89px;font-size:14.6px;color:#a8a8a8;">Shape Outline</div>
<div class="t m" style="left:1544.5px;width:600px;text-align:center;top:174.09px;font-size:14.6px;color:#959595;">Sensitivity</div>
<div class="t m" style="left:1639.4px;width:600px;text-align:center;top:174.09px;font-size:14.6px;color:#ececec;">Add-ins</div>
<div class="t m" style="left:1729.2px;width:600px;text-align:center;top:174.09px;font-size:14.6px;color:#ececec;">Designer</div>
<div class="a" style="left:1px;top:214px;width:2096px;height:2px;background:#0d0d0d"></div>
<div class="a" style="left:1px;top:216px;width:336px;height:1193px;background:#262626"></div>
<div class="a" style="left:331px;top:216px;width:6px;height:1193px;background:#2e2e2e"></div>
<div class="a" style="left:336px;top:216px;width:2px;height:1193px;background:#0d0d0d"></div>
<div class="a" style="left:338px;top:216px;width:1758px;height:1124px;background:#262626"></div>
<div class="a" style="left:372px;top:301px;width:1692px;height:953px;background:#ffffff;box-shadow:0 3px 14px rgba(255,255,255,.07)"></div>
<svg class="a" style="left:0;top:0" width="2560" height="1440" viewBox="0 0 2560 1440"><defs>
<radialGradient id="rbBody" cx="0.42" cy="0.35" r="0.7">
 <stop offset="0" stop-color="#c2e0d4"/><stop offset="0.55" stop-color="#a8cabb"/><stop offset="1" stop-color="#7d9486"/>
</radialGradient>
<radialGradient id="rbDome" cx="0.45" cy="0.3" r="0.75">
 <stop offset="0" stop-color="#d3ebe0"/><stop offset="0.55" stop-color="#abcdbf"/><stop offset="1" stop-color="#6f8578"/>
</radialGradient>
<linearGradient id="rbRust" x1="0" x2="1" y1="0" y2="0">
 <stop offset="0" stop-color="#7a4428"/><stop offset="0.35" stop-color="#a8653e"/><stop offset="0.7" stop-color="#98582f"/><stop offset="1" stop-color="#6a3a22"/>
</linearGradient>
<linearGradient id="rbRustV" x1="0" x2="1">
 <stop offset="0" stop-color="#7a3f25"/><stop offset="0.5" stop-color="#a35f3c"/><stop offset="1" stop-color="#6a3620"/>
</linearGradient>
<radialGradient id="rbFoot" cx="0.45" cy="0.35" r="0.65">
 <stop offset="0" stop-color="#f1f3ea"/><stop offset="0.55" stop-color="#dfe2d4"/><stop offset="0.85" stop-color="#b9b29c"/><stop offset="1" stop-color="#7f6e58"/>
</radialGradient>
<filter id="rbBlur" x="-20%" y="-20%" width="140%" height="140%"><feGaussianBlur stdDeviation="7"/></filter>
<filter id="rbBlur2" x="-20%" y="-20%" width="140%" height="140%"><feGaussianBlur stdDeviation="2.5"/></filter>
<clipPath id="rbClip"><path d="M582 763 C583 700 590 620 600 560 C600 525 603 490 614 466 C625 445 660 428 720 426 C765 426 800 450 814 485 C820 505 822 530 822 560 C822 640 812 700 800 763 Z"/></clipPath>
<linearGradient id="rbArm" x1="0" x2="1">
 <stop offset="0" stop-color="#8ea493"/><stop offset="0.4" stop-color="#b8d2c0"/><stop offset="1" stop-color="#8fa592"/>
</linearGradient>
</defs><g id="robot"><path d="M590 1050 C600 1025 630 1008 680 1003 C720 1000 770 1010 792 1045 C804 1068 800 1096 786 1101 C755 1106 715 1104 690 1112 C660 1128 612 1130 590 1108 C578 1090 582 1066 590 1050Z" fill="#8fb79a" stroke="#86b090" stroke-width="2"/><ellipse cx="636" cy="1040" rx="38" ry="32" fill="#d5d7c7"/><ellipse cx="708" cy="1025" rx="28" ry="24" fill="#d5d6c6"/><path d="M617 902 L662 902 C664 930 655 950 646 965 L633 965 C624 950 615 930 617 902Z" fill="url(#rbRustV)"/><path d="M619 960 L655 960 L657 1035 L649 1035 L646 985 L628 985 L626 1035 L619 1035Z" fill="#7a4a32"/><path d="M716 903 L757 903 C757 930 745 950 735 962 L725 962 C715 940 714 925 716 903Z" fill="url(#rbRustV)"/><ellipse cx="720" cy="985" rx="20" ry="40" fill="#7b6650"/><ellipse cx="745" cy="985" rx="12" ry="36" fill="#6f7a62"/><path d="M584 1075 C588 1036 628 1020 656 1026 C688 1033 694 1070 688 1096 C681 1122 646 1128 620 1124 C592 1118 582 1096 584 1075Z" fill="url(#rbFoot)"/><path d="M692 1050 C695 1016 740 1002 772 1018 C798 1034 804 1070 794 1092 C783 1106 745 1106 723 1097 C702 1088 690 1070 692 1050Z" fill="url(#rbFoot)"/><path d="M582 763 C583 700 590 620 600 560 C600 525 603 490 614 466 C625 445 660 428 720 426 C765 426 800 450 814 485 C820 505 822 530 822 560 C822 640 812 700 800 763 Z" fill="url(#rbBody)"/><path d="M600 560 C600 525 603 490 614 466 C625 445 660 428 720 426 C765 426 800 450 814 485 C820 505 822 530 822 560 C812 600 760 625 700 615 C650 605 612 585 600 560 Z" fill="url(#rbDome)"/><g clip-path="url(#rbClip)"><g filter="url(#rbBlur)"><path d="M612 470 C610 515 628 552 665 572 C700 590 752 594 790 575 C805 567 815 558 822 548 L822 585 C812 600 790 622 748 627 C690 630 640 605 615 565 C602 540 598 500 601 470 Z" fill="#4f5a50" opacity="0.6"/><ellipse cx="610" cy="640" rx="22" ry="60" fill="#5d5a68" opacity="0.45"/><ellipse cx="780" cy="690" rx="30" ry="55" fill="#8a6a48" opacity="0.35"/><ellipse cx="700" cy="700" rx="45" ry="40" fill="#5a5a50" opacity="0.3"/><ellipse cx="660" cy="480" rx="40" ry="35" fill="#e8f6f0" opacity="0.45"/><ellipse cx="600" cy="720" rx="14" ry="40" fill="#4d5a52" opacity="0.35"/></g></g><circle cx="620.6" cy="709.7" r="1.8" fill="#5a4a40" opacity="0.40"/><circle cx="763.5" cy="585.8" r="1.2" fill="#4a4540" opacity="0.39"/><circle cx="596.5" cy="705.8" r="1.3" fill="#4a4540" opacity="0.66"/><circle cx="650.7" cy="694.6" r="1.5" fill="#4a4540" opacity="0.76"/><circle cx="713.4" cy="739.9" r="1.2" fill="#4a4540" opacity="0.79"/><circle cx="755.5" cy="604.1" r="1.8" fill="#5a4a40" opacity="0.60"/><circle cx="668.8" cy="653.4" r="1.8" fill="#5a4a40" opacity="0.77"/><circle cx="684.9" cy="732.4" r="2.1" fill="#4a4540" opacity="0.43"/><circle cx="617.6" cy="539.8" r="1.8" fill="#3f3a36" opacity="0.58"/><circle cx="810.5" cy="597.5" r="2.1" fill="#4a4540" opacity="0.49"/><circle cx="724.0" cy="721.2" r="2.0" fill="#3f3a36" opacity="0.53"/><circle cx="784.5" cy="588.5" r="1.8" fill="#5a4a40" opacity="0.54"/><circle cx="629.4" cy="611.1" r="1.7" fill="#3f3a36" opacity="0.68"/><circle cx="609.7" cy="649.0" r="0.8" fill="#4a4540" opacity="0.58"/><circle cx="679.7" cy="591.6" r="0.6" fill="#4a4540" opacity="0.49"/><circle cx="783.4" cy="632.9" r="1.5" fill="#3f3a36" opacity="0.43"/><circle cx="704.5" cy="754.1" r="1.8" fill="#3f3a36" opacity="0.76"/><circle cx="715.0" cy="563.5" r="1.2" fill="#3f3a36" opacity="0.51"/><circle cx="797.4" cy="647.5" r="1.6" fill="#3f3a36" opacity="0.35"/><circle cx="768.7" cy="700.8" r="2.0" fill="#3f3a36" opacity="0.58"/><circle cx="619.5" cy="686.5" r="0.9" fill="#4a4540" opacity="0.57"/><circle cx="673.2" cy="613.0" r="2.1" fill="#5a4a40" opacity="0.57"/><circle cx="671.3" cy="544.2" r="1.5" fill="#3f3a36" opacity="0.70"/><circle cx="665.5" cy="628.0" r="1.9" fill="#3f3a36" opacity="0.43"/><circle cx="723.3" cy="714.1" r="1.9" fill="#5a4a40" opacity="0.36"/><circle cx="787.9" cy="579.5" r="1.8" fill="#5a4a40" opacity="0.46"/><circle cx="615.0" cy="636.2" r="1.2" fill="#4a4540" opacity="0.43"/><circle cx="648.2" cy="744.1" r="1.7" fill="#3f3a36" opacity="0.67"/><circle cx="693.7" cy="536.3" r="1.4" fill="#4a4540" opacity="0.49"/><circle cx="668.3" cy="692.7" r="1.0" fill="#5a4a40" opacity="0.75"/><circle cx="706.3" cy="499.0" r="1.6" fill="#4a4540" opacity="0.45"/><circle cx="680.6" cy="441.7" r="2.1" fill="#5a4a40" opacity="0.67"/><circle cx="744.6" cy="609.8" r="1.0" fill="#3f3a36" opacity="0.71"/><circle cx="707.8" cy="503.7" r="1.6" fill="#5a4a40" opacity="0.65"/><circle cx="773.2" cy="647.7" r="1.3" fill="#3f3a36" opacity="0.48"/><circle cx="659.9" cy="713.3" r="1.1" fill="#5a4a40" opacity="0.68"/><circle cx="684.9" cy="513.3" r="0.6" fill="#4a4540" opacity="0.62"/><circle cx="639.6" cy="727.3" r="1.3" fill="#3f3a36" opacity="0.63"/><circle cx="612.6" cy="619.2" r="2.0" fill="#3f3a36" opacity="0.44"/><circle cx="613.8" cy="649.8" r="1.1" fill="#5a4a40" opacity="0.36"/><circle cx="729.6" cy="562.8" r="1.1" fill="#4a4540" opacity="0.44"/><circle cx="664.7" cy="755.7" r="1.9" fill="#5a4a40" opacity="0.54"/><circle cx="650.8" cy="461.8" r="1.2" fill="#3f3a36" opacity="0.50"/><circle cx="791.2" cy="656.7" r="1.4" fill="#3f3a36" opacity="0.46"/><circle cx="755.4" cy="457.9" r="0.9" fill="#3f3a36" opacity="0.45"/><circle cx="763.1" cy="628.1" r="1.9" fill="#5a4a40" opacity="0.50"/><circle cx="616.0" cy="507.6" r="2.1" fill="#3f3a36" opacity="0.75"/><circle cx="620.9" cy="611.9" r="0.8" fill="#4a4540" opacity="0.53"/><circle cx="676.7" cy="757.1" r="0.8" fill="#4a4540" opacity="0.50"/><circle cx="730.3" cy="688.0" r="1.2" fill="#3f3a36" opacity="0.60"/><circle cx="719.0" cy="744.2" r="1.2" fill="#5a4a40" opacity="0.60"/><circle cx="800.9" cy="581.1" r="1.0" fill="#4a4540" opacity="0.72"/><circle cx="592.8" cy="651.2" r="0.7" fill="#4a4540" opacity="0.72"/><circle cx="770.1" cy="492.0" r="1.9" fill="#3f3a36" opacity="0.54"/><circle cx="616.3" cy="485.2" r="1.0" fill="#3f3a36" opacity="0.73"/><circle cx="689.2" cy="748.3" r="1.9" fill="#3f3a36" opacity="0.76"/><circle cx="657.0" cy="513.6" r="1.4" fill="#4a4540" opacity="0.44"/><circle cx="662.4" cy="439.0" r="1.9" fill="#5a4a40" opacity="0.68"/><circle cx="663.0" cy="559.1" r="1.2" fill="#4a4540" opacity="0.76"/><circle cx="615.4" cy="501.0" r="1.6" fill="#3f3a36" opacity="0.74"/><circle cx="696.9" cy="547.4" r="0.9" fill="#4a4540" opacity="0.49"/><circle cx="646.2" cy="456.9" r="1.0" fill="#5a4a40" opacity="0.39"/><circle cx="721.0" cy="541.8" r="1.0" fill="#5a4a40" opacity="0.37"/><circle cx="632.6" cy="691.6" r="1.5" fill="#5a4a40" opacity="0.46"/><circle cx="613.0" cy="631.8" r="1.9" fill="#4a4540" opacity="0.46"/><circle cx="606.5" cy="611.9" r="0.7" fill="#4a4540" opacity="0.36"/><circle cx="592.3" cy="677.7" r="1.2" fill="#5a4a40" opacity="0.74"/><circle cx="625.2" cy="595.5" r="1.9" fill="#4a4540" opacity="0.58"/><circle cx="741.7" cy="489.3" r="0.8" fill="#4a4540" opacity="0.72"/><circle cx="662.9" cy="465.3" r="1.4" fill="#3f3a36" opacity="0.48"/><circle cx="793.8" cy="476.8" r="2.1" fill="#4a4540" opacity="0.70"/><circle cx="777.2" cy="635.8" r="1.7" fill="#3f3a36" opacity="0.73"/><circle cx="760.1" cy="657.6" r="0.9" fill="#5a4a40" opacity="0.59"/><circle cx="601.1" cy="714.5" r="1.0" fill="#4a4540" opacity="0.66"/><circle cx="691.8" cy="572.0" r="1.0" fill="#5a4a40" opacity="0.73"/><circle cx="693.4" cy="560.6" r="1.1" fill="#5a4a40" opacity="0.57"/><circle cx="770.8" cy="737.8" r="2.2" fill="#4a4540" opacity="0.38"/><circle cx="670.9" cy="475.6" r="0.8" fill="#5a4a40" opacity="0.79"/><circle cx="653.1" cy="616.1" r="0.9" fill="#4a4540" opacity="0.46"/><circle cx="704.2" cy="644.1" r="1.3" fill="#3f3a36" opacity="0.64"/><circle cx="641.5" cy="533.3" r="1.7" fill="#4a4540" opacity="0.67"/><circle cx="666.8" cy="631.7" r="1.8" fill="#3f3a36" opacity="0.47"/><circle cx="737.4" cy="445.9" r="0.7" fill="#3f3a36" opacity="0.64"/><circle cx="674.1" cy="598.8" r="1.9" fill="#4a4540" opacity="0.49"/><circle cx="747.9" cy="710.2" r="1.2" fill="#3f3a36" opacity="0.67"/><circle cx="696.0" cy="458.0" r="0.8" fill="#3f3a36" opacity="0.78"/><circle cx="720.2" cy="488.2" r="1.0" fill="#4a4540" opacity="0.77"/><circle cx="754.1" cy="688.1" r="1.4" fill="#5a4a40" opacity="0.67"/><circle cx="669.3" cy="600.0" r="0.9" fill="#3f3a36" opacity="0.80"/><circle cx="709.5" cy="459.8" r="1.0" fill="#4a4540" opacity="0.47"/><circle cx="798.1" cy="746.6" r="0.8" fill="#3f3a36" opacity="0.73"/><circle cx="740.4" cy="661.1" r="1.3" fill="#4a4540" opacity="0.79"/><circle cx="677.2" cy="694.9" r="1.3" fill="#4a4540" opacity="0.76"/><circle cx="689.9" cy="635.4" r="1.4" fill="#4a4540" opacity="0.40"/><circle cx="727.0" cy="564.7" r="0.8" fill="#5a4a40" opacity="0.47"/><circle cx="676.4" cy="614.6" r="2.1" fill="#3f3a36" opacity="0.55"/><circle cx="594.8" cy="637.1" r="1.6" fill="#5a4a40" opacity="0.44"/><circle cx="654.9" cy="609.0" r="1.0" fill="#3f3a36" opacity="0.69"/><circle cx="779.8" cy="577.3" r="2.0" fill="#4a4540" opacity="0.60"/><circle cx="701.9" cy="712.4" r="1.8" fill="#3f3a36" opacity="0.75"/><circle cx="636.7" cy="697.5" r="2.0" fill="#4a4540" opacity="0.40"/><circle cx="760.4" cy="609.9" r="2.1" fill="#3f3a36" opacity="0.79"/><circle cx="621.1" cy="595.1" r="1.5" fill="#5a4a40" opacity="0.55"/><circle cx="744.4" cy="680.3" r="1.1" fill="#4a4540" opacity="0.55"/><circle cx="692.5" cy="530.6" r="1.2" fill="#3f3a36" opacity="0.66"/><circle cx="702.2" cy="643.7" r="1.2" fill="#4a4540" opacity="0.60"/><circle cx="754.7" cy="673.7" r="1.8" fill="#4a4540" opacity="0.79"/><circle cx="695.2" cy="705.4" r="1.3" fill="#3f3a36" opacity="0.67"/><circle cx="692.5" cy="650.7" r="0.9" fill="#3f3a36" opacity="0.35"/><circle cx="678.7" cy="570.5" r="1.2" fill="#3f3a36" opacity="0.61"/><circle cx="757.3" cy="726.3" r="1.8" fill="#5a4a40" opacity="0.79"/><circle cx="646.5" cy="749.1" r="1.1" fill="#4a4540" opacity="0.53"/><circle cx="733.5" cy="639.1" r="2.1" fill="#5a4a40" opacity="0.73"/><circle cx="765.0" cy="699.1" r="1.6" fill="#5a4a40" opacity="0.76"/><circle cx="772.0" cy="565.7" r="1.7" fill="#5a4a40" opacity="0.42"/><circle cx="779.9" cy="589.9" r="1.3" fill="#4a4540" opacity="0.47"/><circle cx="612.5" cy="624.9" r="0.7" fill="#4a4540" opacity="0.65"/><circle cx="594.5" cy="597.4" r="2.1" fill="#3f3a36" opacity="0.39"/><circle cx="735.0" cy="521.0" r="1.1" fill="#3f3a36" opacity="0.44"/><circle cx="792.0" cy="518.8" r="0.7" fill="#3f3a36" opacity="0.65"/><circle cx="696.7" cy="614.0" r="0.7" fill="#5a4a40" opacity="0.64"/><circle cx="752.7" cy="699.0" r="1.0" fill="#3f3a36" opacity="0.68"/><circle cx="679.5" cy="561.9" r="1.4" fill="#5a4a40" opacity="0.74"/><circle cx="665.2" cy="503.4" r="2.1" fill="#3f3a36" opacity="0.46"/><circle cx="740.7" cy="711.1" r="2.0" fill="#5a4a40" opacity="0.49"/><circle cx="688.4" cy="681.3" r="1.9" fill="#4a4540" opacity="0.38"/><circle cx="757.0" cy="717.4" r="1.5" fill="#3f3a36" opacity="0.76"/><circle cx="756.0" cy="630.1" r="1.0" fill="#3f3a36" opacity="0.42"/><circle cx="767.5" cy="725.0" r="1.3" fill="#5a4a40" opacity="0.69"/><circle cx="644.8" cy="667.0" r="1.7" fill="#5a4a40" opacity="0.38"/><circle cx="688.5" cy="602.2" r="1.9" fill="#3e3832" opacity="0.82"/><circle cx="749.4" cy="605.3" r="2.4" fill="#4a3f36" opacity="0.47"/><circle cx="684.3" cy="597.2" r="0.9" fill="#5b4a3a" opacity="0.48"/><circle cx="599.9" cy="581.4" r="1.9" fill="#3e3832" opacity="0.71"/><circle cx="602.0" cy="618.1" r="0.8" fill="#4a3f36" opacity="0.58"/><circle cx="713.9" cy="600.5" r="1.3" fill="#4a3f36" opacity="0.50"/><circle cx="673.8" cy="591.1" r="0.9" fill="#3e3832" opacity="0.70"/><circle cx="661.4" cy="583.8" r="1.7" fill="#2f2a26" opacity="0.66"/><circle cx="737.8" cy="588.9" r="1.2" fill="#4a3f36" opacity="0.76"/><circle cx="702.2" cy="613.3" r="1.7" fill="#2f2a26" opacity="0.78"/><circle cx="670.2" cy="633.1" r="0.9" fill="#5b4a3a" opacity="0.52"/><circle cx="642.8" cy="622.3" r="1.5" fill="#3e3832" opacity="0.79"/><circle cx="617.6" cy="582.3" r="1.3" fill="#2f2a26" opacity="0.72"/><circle cx="656.5" cy="587.6" r="2.3" fill="#2f2a26" opacity="0.66"/><circle cx="691.8" cy="590.8" r="2.0" fill="#5b4a3a" opacity="0.58"/><circle cx="649.6" cy="608.7" r="0.7" fill="#5b4a3a" opacity="0.61"/><circle cx="659.7" cy="584.5" r="1.1" fill="#2f2a26" opacity="0.51"/><circle cx="700.7" cy="608.9" r="2.4" fill="#3e3832" opacity="0.52"/><circle cx="670.4" cy="601.5" r="1.0" fill="#5b4a3a" opacity="0.84"/><circle cx="691.7" cy="609.3" r="1.4" fill="#5b4a3a" opacity="0.88"/><circle cx="716.3" cy="602.1" r="1.1" fill="#4a3f36" opacity="0.46"/><circle cx="713.9" cy="587.2" r="1.2" fill="#4a3f36" opacity="0.64"/><circle cx="660.4" cy="608.3" r="2.5" fill="#3e3832" opacity="0.66"/><circle cx="776.4" cy="570.0" r="2.0" fill="#5b4a3a" opacity="0.63"/><circle cx="659.4" cy="604.9" r="1.5" fill="#4a3f36" opacity="0.48"/><circle cx="706.9" cy="603.1" r="1.3" fill="#3e3832" opacity="0.50"/><circle cx="649.0" cy="587.9" r="2.5" fill="#3e3832" opacity="0.48"/><circle cx="711.4" cy="608.1" r="1.9" fill="#2f2a26" opacity="0.72"/><circle cx="678.0" cy="596.1" r="1.6" fill="#5b4a3a" opacity="0.67"/><circle cx="690.5" cy="602.2" r="2.1" fill="#2f2a26" opacity="0.67"/><circle cx="680.7" cy="579.2" r="1.1" fill="#2f2a26" opacity="0.52"/><circle cx="689.8" cy="594.1" r="1.7" fill="#3e3832" opacity="0.76"/><circle cx="697.0" cy="608.3" r="1.0" fill="#4a3f36" opacity="0.69"/><circle cx="707.3" cy="582.7" r="1.1" fill="#4a3f36" opacity="0.81"/><circle cx="730.7" cy="574.1" r="1.1" fill="#5b4a3a" opacity="0.61"/><circle cx="710.5" cy="595.6" r="1.2" fill="#2f2a26" opacity="0.54"/><circle cx="667.4" cy="587.1" r="2.2" fill="#2f2a26" opacity="0.88"/><circle cx="679.1" cy="602.4" r="1.1" fill="#4a3f36" opacity="0.60"/><circle cx="697.9" cy="594.4" r="2.4" fill="#2f2a26" opacity="0.81"/><circle cx="757.0" cy="605.5" r="2.4" fill="#4a3f36" opacity="0.67"/><circle cx="734.5" cy="617.3" r="1.3" fill="#5b4a3a" opacity="0.66"/><circle cx="699.2" cy="589.1" r="1.0" fill="#4a3f36" opacity="0.46"/><circle cx="657.6" cy="586.5" r="1.9" fill="#5b4a3a" opacity="0.75"/><circle cx="666.5" cy="609.3" r="0.9" fill="#3e3832" opacity="0.81"/><circle cx="696.9" cy="588.6" r="2.1" fill="#4a3f36" opacity="0.65"/><circle cx="758.3" cy="576.1" r="1.1" fill="#2f2a26" opacity="0.55"/><circle cx="623.6" cy="594.8" r="1.3" fill="#5b4a3a" opacity="0.83"/><circle cx="768.5" cy="603.6" r="2.4" fill="#5b4a3a" opacity="0.82"/><circle cx="717.2" cy="589.9" r="1.0" fill="#3e3832" opacity="0.84"/><circle cx="710.2" cy="576.1" r="2.2" fill="#4a3f36" opacity="0.53"/><circle cx="628.7" cy="598.7" r="1.8" fill="#2f2a26" opacity="0.76"/><circle cx="649.3" cy="591.9" r="2.2" fill="#3e3832" opacity="0.56"/><circle cx="687.0" cy="618.7" r="1.7" fill="#3e3832" opacity="0.79"/><circle cx="741.5" cy="587.1" r="1.9" fill="#4a3f36" opacity="0.76"/><circle cx="646.9" cy="600.1" r="1.6" fill="#4a3f36" opacity="0.76"/><circle cx="776.7" cy="571.6" r="1.2" fill="#4a3f36" opacity="0.83"/><circle cx="714.9" cy="600.4" r="1.5" fill="#3e3832" opacity="0.75"/><circle cx="672.0" cy="599.2" r="1.3" fill="#3e3832" opacity="0.85"/><circle cx="740.3" cy="613.3" r="2.0" fill="#4a3f36" opacity="0.56"/><circle cx="732.9" cy="606.9" r="2.1" fill="#3e3832" opacity="0.63"/><circle cx="713.2" cy="587.8" r="1.5" fill="#5b4a3a" opacity="0.60"/><circle cx="713.2" cy="606.6" r="2.1" fill="#3e3832" opacity="0.60"/><circle cx="632.2" cy="600.6" r="1.4" fill="#2f2a26" opacity="0.68"/><circle cx="728.7" cy="558.7" r="0.9" fill="#2f2a26" opacity="0.57"/><circle cx="723.6" cy="590.1" r="2.1" fill="#5b4a3a" opacity="0.83"/><circle cx="651.2" cy="564.8" r="1.5" fill="#5b4a3a" opacity="0.77"/><circle cx="713.1" cy="597.6" r="2.0" fill="#5b4a3a" opacity="0.85"/><circle cx="699.0" cy="597.6" r="0.9" fill="#2f2a26" opacity="0.49"/><circle cx="710.3" cy="590.9" r="2.3" fill="#5b4a3a" opacity="0.46"/><circle cx="746.8" cy="594.5" r="2.4" fill="#4a3f36" opacity="0.47"/><circle cx="673.3" cy="563.0" r="2.5" fill="#2f2a26" opacity="0.47"/><circle cx="711.6" cy="606.6" r="1.3" fill="#4a3f36" opacity="0.58"/><circle cx="671.8" cy="595.0" r="1.4" fill="#3e3832" opacity="0.90"/><circle cx="708.4" cy="595.6" r="1.7" fill="#4a3f36" opacity="0.68"/><circle cx="701.3" cy="610.2" r="2.0" fill="#5b4a3a" opacity="0.75"/><circle cx="609.6" cy="586.7" r="2.5" fill="#2f2a26" opacity="0.76"/><circle cx="741.0" cy="593.6" r="2.3" fill="#4a3f36" opacity="0.63"/><circle cx="691.3" cy="598.8" r="0.9" fill="#3e3832" opacity="0.73"/><circle cx="734.8" cy="584.8" r="0.8" fill="#5b4a3a" opacity="0.84"/><circle cx="682.5" cy="585.0" r="1.2" fill="#2f2a26" opacity="0.47"/><circle cx="714.1" cy="605.2" r="0.7" fill="#2f2a26" opacity="0.88"/><circle cx="755.8" cy="592.0" r="1.2" fill="#2f2a26" opacity="0.55"/><circle cx="716.6" cy="606.5" r="0.9" fill="#2f2a26" opacity="0.68"/><circle cx="716.2" cy="610.8" r="0.7" fill="#2f2a26" opacity="0.82"/><circle cx="737.0" cy="609.6" r="1.4" fill="#2f2a26" opacity="0.59"/><circle cx="706.4" cy="613.5" r="1.7" fill="#4a3f36" opacity="0.75"/><circle cx="680.4" cy="566.9" r="1.4" fill="#2f2a26" opacity="0.77"/><circle cx="663.2" cy="595.4" r="1.9" fill="#4a3f36" opacity="0.47"/><circle cx="748.5" cy="569.6" r="1.9" fill="#4a3f36" opacity="0.86"/><circle cx="701.1" cy="576.9" r="2.2" fill="#3e3832" opacity="0.82"/><circle cx="617.9" cy="580.1" r="2.0" fill="#4a3f36" opacity="0.49"/><circle cx="761.9" cy="600.2" r="2.5" fill="#5b4a3a" opacity="0.83"/><circle cx="641.0" cy="587.9" r="1.9" fill="#4a3f36" opacity="0.67"/><circle cx="780.4" cy="595.5" r="2.1" fill="#3e3832" opacity="0.75"/><circle cx="767.3" cy="604.2" r="1.2" fill="#3e3832" opacity="0.83"/><circle cx="707.2" cy="618.4" r="1.1" fill="#5b4a3a" opacity="0.67"/><circle cx="662.0" cy="605.8" r="2.0" fill="#3e3832" opacity="0.73"/><circle cx="688.7" cy="590.6" r="1.0" fill="#2f2a26" opacity="0.74"/><circle cx="678.0" cy="576.7" r="1.0" fill="#5b4a3a" opacity="0.48"/><circle cx="692.1" cy="615.8" r="2.0" fill="#5b4a3a" opacity="0.58"/><circle cx="650.0" cy="593.4" r="1.6" fill="#3e3832" opacity="0.90"/><circle cx="662.9" cy="591.3" r="0.9" fill="#5b4a3a" opacity="0.46"/><circle cx="619.4" cy="601.6" r="2.5" fill="#5b4a3a" opacity="0.90"/><circle cx="624.0" cy="615.4" r="2.5" fill="#3e3832" opacity="0.71"/><circle cx="734.5" cy="608.3" r="2.5" fill="#4a3f36" opacity="0.72"/><circle cx="675.3" cy="586.7" r="0.9" fill="#2f2a26" opacity="0.55"/><circle cx="741.6" cy="585.3" r="0.7" fill="#3e3832" opacity="0.88"/><circle cx="680.9" cy="582.0" r="2.1" fill="#5b4a3a" opacity="0.60"/><circle cx="665.2" cy="619.5" r="0.7" fill="#2f2a26" opacity="0.83"/><circle cx="774.9" cy="616.9" r="2.1" fill="#2f2a26" opacity="0.56"/><circle cx="741.1" cy="600.5" r="2.4" fill="#3e3832" opacity="0.61"/><circle cx="667.5" cy="599.9" r="0.8" fill="#3e3832" opacity="0.47"/><circle cx="666.4" cy="578.1" r="1.0" fill="#2f2a26" opacity="0.65"/><circle cx="668.9" cy="617.1" r="2.2" fill="#5b4a3a" opacity="0.85"/><circle cx="724.1" cy="576.7" r="2.4" fill="#4a3f36" opacity="0.77"/><circle cx="769.6" cy="602.0" r="1.6" fill="#4a3f36" opacity="0.74"/><circle cx="696.8" cy="599.3" r="2.5" fill="#4a3f36" opacity="0.53"/><circle cx="668.5" cy="600.8" r="1.2" fill="#2f2a26" opacity="0.63"/><circle cx="703.7" cy="611.0" r="2.0" fill="#3e3832" opacity="0.53"/><circle cx="716.2" cy="603.1" r="2.4" fill="#5b4a3a" opacity="0.70"/><circle cx="661.3" cy="598.7" r="2.1" fill="#5b4a3a" opacity="0.51"/><circle cx="706.9" cy="600.7" r="1.3" fill="#3e3832" opacity="0.59"/><circle cx="644.6" cy="613.8" r="1.1" fill="#3e3832" opacity="0.79"/><circle cx="660.3" cy="602.5" r="1.7" fill="#5b4a3a" opacity="0.57"/><circle cx="700.7" cy="578.6" r="1.8" fill="#2f2a26" opacity="0.51"/><circle cx="636.6" cy="594.6" r="2.3" fill="#4a3f36" opacity="0.49"/><circle cx="735.3" cy="586.7" r="1.9" fill="#5b4a3a" opacity="0.88"/><circle cx="753.1" cy="571.9" r="0.7" fill="#3e3832" opacity="0.64"/><circle cx="707.0" cy="569.8" r="2.5" fill="#5b4a3a" opacity="0.45"/><circle cx="620.1" cy="615.2" r="2.3" fill="#5b4a3a" opacity="0.89"/><circle cx="700.2" cy="601.7" r="1.0" fill="#3e3832" opacity="0.87"/><circle cx="688.5" cy="575.1" r="2.2" fill="#5b4a3a" opacity="0.49"/><circle cx="700.4" cy="594.3" r="0.9" fill="#3e3832" opacity="0.74"/><circle cx="692.2" cy="601.9" r="1.2" fill="#5b4a3a" opacity="0.76"/><circle cx="713.1" cy="598.5" r="1.7" fill="#4a3f36" opacity="0.62"/><circle cx="710.1" cy="613.7" r="0.7" fill="#2f2a26" opacity="0.90"/><circle cx="693.0" cy="607.0" r="2.3" fill="#4a3f36" opacity="0.66"/><circle cx="703.2" cy="605.5" r="2.5" fill="#2f2a26" opacity="0.47"/><circle cx="732.2" cy="622.3" r="1.9" fill="#3e3832" opacity="0.57"/><circle cx="649.2" cy="567.3" r="1.1" fill="#3e3832" opacity="0.76"/><circle cx="691.6" cy="582.0" r="1.5" fill="#3e3832" opacity="0.81"/><circle cx="696.4" cy="578.4" r="1.1" fill="#4a3f36" opacity="0.59"/><circle cx="713.9" cy="585.8" r="1.1" fill="#2f2a26" opacity="0.50"/><circle cx="655.9" cy="581.5" r="2.4" fill="#5b4a3a" opacity="0.64"/><circle cx="644.3" cy="565.6" r="1.0" fill="#5b4a3a" opacity="0.47"/><circle cx="759.9" cy="597.8" r="1.5" fill="#3e3832" opacity="0.53"/><circle cx="632.5" cy="601.9" r="1.3" fill="#3e3832" opacity="0.90"/><circle cx="736.6" cy="589.8" r="1.1" fill="#5b4a3a" opacity="0.46"/><circle cx="677.5" cy="583.3" r="1.4" fill="#2f2a26" opacity="0.65"/><circle cx="714.1" cy="598.6" r="0.9" fill="#5b4a3a" opacity="0.88"/><circle cx="782.8" cy="620.3" r="1.1" fill="#2f2a26" opacity="0.80"/><circle cx="670.7" cy="618.6" r="0.9" fill="#5b4a3a" opacity="0.54"/><circle cx="652.7" cy="591.1" r="1.3" fill="#5b4a3a" opacity="0.46"/><circle cx="630.3" cy="608.6" r="2.2" fill="#3e3832" opacity="0.62"/><circle cx="620.9" cy="600.7" r="0.8" fill="#4a3f36" opacity="0.79"/><circle cx="732.9" cy="587.4" r="1.2" fill="#3e3832" opacity="0.57"/><circle cx="691.8" cy="583.1" r="1.2" fill="#3e3832" opacity="0.77"/><circle cx="632.8" cy="580.7" r="2.5" fill="#3e3832" opacity="0.46"/><circle cx="705.2" cy="610.8" r="2.5" fill="#5b4a3a" opacity="0.81"/><circle cx="770.7" cy="581.7" r="1.0" fill="#5b4a3a" opacity="0.53"/><circle cx="723.9" cy="573.3" r="2.3" fill="#4a3f36" opacity="0.72"/><circle cx="681.5" cy="605.8" r="1.4" fill="#3e3832" opacity="0.68"/><circle cx="679.4" cy="600.2" r="1.5" fill="#3e3832" opacity="0.67"/><circle cx="674.4" cy="592.7" r="1.5" fill="#3e3832" opacity="0.89"/><circle cx="698.2" cy="600.8" r="0.9" fill="#5b4a3a" opacity="0.89"/><circle cx="727.3" cy="593.5" r="1.0" fill="#5b4a3a" opacity="0.73"/><circle cx="665.7" cy="574.3" r="2.3" fill="#3e3832" opacity="0.80"/><circle cx="622.8" cy="543.4" r="1.2" fill="#2f2a26" opacity="0.78"/><circle cx="627.4" cy="541.5" r="1.2" fill="#4a3f36" opacity="0.58"/><circle cx="630.4" cy="509.4" r="0.8" fill="#2f2a26" opacity="0.90"/><circle cx="617.8" cy="519.0" r="2.2" fill="#5b4a3a" opacity="0.90"/><circle cx="634.1" cy="540.4" r="2.3" fill="#5b4a3a" opacity="0.86"/><circle cx="633.1" cy="526.3" r="0.9" fill="#4a3f36" opacity="0.72"/><circle cx="628.1" cy="502.6" r="0.8" fill="#4a3f36" opacity="0.65"/><circle cx="623.9" cy="571.9" r="2.5" fill="#3e3832" opacity="0.74"/><circle cx="622.7" cy="493.1" r="0.8" fill="#2f2a26" opacity="0.51"/><circle cx="627.2" cy="542.1" r="1.8" fill="#4a3f36" opacity="0.82"/><circle cx="629.3" cy="492.1" r="1.4" fill="#2f2a26" opacity="0.49"/><circle cx="636.5" cy="526.9" r="1.6" fill="#5b4a3a" opacity="0.50"/><circle cx="615.0" cy="543.2" r="1.9" fill="#3e3832" opacity="0.74"/><circle cx="618.6" cy="534.3" r="2.6" fill="#2f2a26" opacity="0.64"/><circle cx="640.7" cy="535.7" r="2.4" fill="#5b4a3a" opacity="0.64"/><circle cx="620.7" cy="535.0" r="2.1" fill="#4a3f36" opacity="0.87"/><circle cx="619.7" cy="527.0" r="0.9" fill="#3e3832" opacity="0.63"/><circle cx="633.2" cy="497.6" r="1.0" fill="#3e3832" opacity="0.47"/><circle cx="636.3" cy="562.4" r="1.5" fill="#2f2a26" opacity="0.78"/><circle cx="629.4" cy="544.5" r="1.0" fill="#4a3f36" opacity="0.87"/><circle cx="634.0" cy="542.0" r="2.2" fill="#4a3f36" opacity="0.59"/><circle cx="626.6" cy="512.4" r="2.4" fill="#2f2a26" opacity="0.47"/><circle cx="633.9" cy="506.7" r="2.4" fill="#4a3f36" opacity="0.74"/><circle cx="633.6" cy="487.2" r="1.9" fill="#4a3f36" opacity="0.82"/><circle cx="627.9" cy="539.2" r="1.5" fill="#4a3f36" opacity="0.62"/><circle cx="630.4" cy="535.8" r="2.1" fill="#4a3f36" opacity="0.47"/><circle cx="609.4" cy="500.7" r="0.8" fill="#2f2a26" opacity="0.50"/><circle cx="614.8" cy="497.8" r="1.9" fill="#2f2a26" opacity="0.74"/><circle cx="622.3" cy="541.2" r="1.4" fill="#2f2a26" opacity="0.65"/><circle cx="623.0" cy="522.5" r="1.9" fill="#5b4a3a" opacity="0.66"/><circle cx="611.9" cy="533.7" r="2.3" fill="#4a3f36" opacity="0.81"/><circle cx="622.0" cy="526.6" r="1.4" fill="#2f2a26" opacity="0.49"/><circle cx="613.8" cy="532.8" r="0.8" fill="#4a3f36" opacity="0.49"/><circle cx="621.7" cy="519.3" r="1.7" fill="#5b4a3a" opacity="0.74"/><circle cx="625.5" cy="513.3" r="0.8" fill="#3e3832" opacity="0.54"/><circle cx="636.6" cy="516.0" r="2.5" fill="#4a3f36" opacity="0.76"/><circle cx="623.7" cy="499.1" r="2.3" fill="#2f2a26" opacity="0.52"/><circle cx="631.4" cy="505.4" r="2.2" fill="#4a3f36" opacity="0.56"/><circle cx="672.3" cy="513.6" r="1.8" fill="#4a3f36" opacity="0.59"/><circle cx="662.3" cy="523.6" r="1.0" fill="#2f2a26" opacity="0.76"/><circle cx="659.6" cy="510.7" r="2.2" fill="#3e3832" opacity="0.80"/><circle cx="687.7" cy="534.8" r="2.5" fill="#5b4a3a" opacity="0.70"/><circle cx="613.7" cy="495.1" r="0.9" fill="#5b4a3a" opacity="0.78"/><circle cx="636.6" cy="537.5" r="1.4" fill="#4a3f36" opacity="0.61"/><circle cx="652.0" cy="493.1" r="1.0" fill="#3e3832" opacity="0.58"/><circle cx="632.9" cy="517.8" r="2.5" fill="#2f2a26" opacity="0.78"/><circle cx="649.7" cy="502.3" r="1.3" fill="#5b4a3a" opacity="0.64"/><circle cx="645.9" cy="525.9" r="1.6" fill="#3e3832" opacity="0.46"/><circle cx="668.7" cy="520.4" r="0.9" fill="#2f2a26" opacity="0.69"/><circle cx="635.5" cy="531.0" r="1.0" fill="#2f2a26" opacity="0.73"/><circle cx="639.4" cy="522.1" r="2.5" fill="#4a3f36" opacity="0.77"/><circle cx="643.1" cy="522.8" r="1.0" fill="#2f2a26" opacity="0.63"/><circle cx="649.7" cy="523.8" r="1.9" fill="#2f2a26" opacity="0.72"/><circle cx="626.1" cy="503.9" r="1.7" fill="#5b4a3a" opacity="0.56"/><circle cx="654.9" cy="515.7" r="1.7" fill="#5b4a3a" opacity="0.53"/><circle cx="673.8" cy="566.4" r="0.9" fill="#4a3f36" opacity="0.51"/><circle cx="658.5" cy="552.5" r="1.7" fill="#5b4a3a" opacity="0.82"/><circle cx="657.8" cy="539.1" r="1.3" fill="#3e3832" opacity="0.90"/><circle cx="646.3" cy="491.9" r="1.7" fill="#5b4a3a" opacity="0.83"/><circle cx="649.3" cy="492.0" r="2.1" fill="#5b4a3a" opacity="0.53"/><circle cx="665.6" cy="519.6" r="1.9" fill="#3e3832" opacity="0.60"/><circle cx="649.9" cy="481.5" r="2.3" fill="#3e3832" opacity="0.57"/><circle cx="629.8" cy="511.1" r="2.2" fill="#2f2a26" opacity="0.58"/><circle cx="688.2" cy="497.0" r="0.9" fill="#3e3832" opacity="0.53"/><circle cx="681.7" cy="492.9" r="1.1" fill="#4a3f36" opacity="0.79"/><circle cx="630.9" cy="565.6" r="1.3" fill="#4a3f36" opacity="0.62"/><circle cx="677.0" cy="474.8" r="2.6" fill="#5b4a3a" opacity="0.66"/><circle cx="647.8" cy="519.5" r="0.8" fill="#4a3f36" opacity="0.71"/><circle cx="645.1" cy="536.1" r="1.9" fill="#3e3832" opacity="0.70"/><circle cx="652.4" cy="525.7" r="0.9" fill="#4a3f36" opacity="0.61"/><circle cx="653.0" cy="524.7" r="0.8" fill="#3e3832" opacity="0.76"/><circle cx="649.4" cy="510.8" r="1.8" fill="#2f2a26" opacity="0.54"/><circle cx="673.7" cy="511.3" r="2.0" fill="#5b4a3a" opacity="0.50"/><circle cx="652.7" cy="531.7" r="0.8" fill="#3e3832" opacity="0.82"/><circle cx="638.8" cy="504.9" r="0.9" fill="#3e3832" opacity="0.81"/><circle cx="639.9" cy="503.4" r="1.3" fill="#2f2a26" opacity="0.46"/><circle cx="649.3" cy="540.4" r="2.1" fill="#2f2a26" opacity="0.86"/><circle cx="653.3" cy="486.3" r="1.6" fill="#2f2a26" opacity="0.73"/><circle cx="670.3" cy="525.0" r="1.5" fill="#3e3832" opacity="0.61"/><circle cx="643.0" cy="490.2" r="1.1" fill="#3e3832" opacity="0.71"/><circle cx="645.1" cy="546.0" r="1.7" fill="#2f2a26" opacity="0.79"/><circle cx="651.9" cy="519.7" r="1.6" fill="#5b4a3a" opacity="0.76"/><circle cx="673.8" cy="461.8" r="1.8" fill="#2f2a26" opacity="0.71"/><circle cx="669.9" cy="558.6" r="2.5" fill="#4a3f36" opacity="0.67"/><circle cx="671.9" cy="542.7" r="0.9" fill="#3e3832" opacity="0.73"/><circle cx="637.5" cy="539.9" r="1.4" fill="#3e3832" opacity="0.64"/><circle cx="638.3" cy="500.9" r="1.3" fill="#5b4a3a" opacity="0.86"/><circle cx="630.5" cy="519.8" r="2.4" fill="#4a3f36" opacity="0.87"/><circle cx="801.3" cy="554.0" r="2.0" fill="#3e3832" opacity="0.61"/><circle cx="786.8" cy="542.9" r="2.3" fill="#2f2a26" opacity="0.53"/><circle cx="770.8" cy="546.2" r="1.8" fill="#4a3f36" opacity="0.60"/><circle cx="778.4" cy="499.8" r="1.7" fill="#2f2a26" opacity="0.59"/><circle cx="783.3" cy="483.9" r="1.0" fill="#4a3f36" opacity="0.89"/><circle cx="787.3" cy="496.5" r="1.4" fill="#4a3f36" opacity="0.60"/><circle cx="802.1" cy="593.1" r="2.1" fill="#3e3832" opacity="0.52"/><circle cx="785.7" cy="516.2" r="1.0" fill="#4a3f36" opacity="0.81"/><circle cx="788.7" cy="503.4" r="1.1" fill="#3e3832" opacity="0.58"/><circle cx="800.1" cy="511.6" r="0.7" fill="#5b4a3a" opacity="0.76"/><circle cx="773.0" cy="529.9" r="1.6" fill="#4a3f36" opacity="0.57"/><circle cx="789.9" cy="527.4" r="1.2" fill="#5b4a3a" opacity="0.77"/><circle cx="775.2" cy="511.2" r="2.3" fill="#4a3f36" opacity="0.76"/><circle cx="781.7" cy="508.6" r="1.3" fill="#3e3832" opacity="0.85"/><circle cx="790.6" cy="555.2" r="2.1" fill="#4a3f36" opacity="0.56"/><circle cx="778.3" cy="542.7" r="1.9" fill="#5b4a3a" opacity="0.68"/><circle cx="777.1" cy="486.9" r="2.4" fill="#2f2a26" opacity="0.80"/><circle cx="779.3" cy="548.7" r="2.6" fill="#3e3832" opacity="0.56"/><circle cx="793.8" cy="568.9" r="2.5" fill="#4a3f36" opacity="0.68"/><circle cx="802.6" cy="549.4" r="1.7" fill="#5b4a3a" opacity="0.68"/><circle cx="775.5" cy="493.9" r="1.7" fill="#5b4a3a" opacity="0.78"/><circle cx="754.8" cy="550.4" r="1.0" fill="#3e3832" opacity="0.78"/><circle cx="777.1" cy="506.6" r="1.2" fill="#5b4a3a" opacity="0.63"/><circle cx="802.5" cy="532.2" r="1.5" fill="#2f2a26" opacity="0.71"/><circle cx="797.9" cy="543.5" r="1.5" fill="#4a3f36" opacity="0.90"/><circle cx="803.0" cy="523.2" r="1.0" fill="#3e3832" opacity="0.81"/><circle cx="781.0" cy="509.0" r="1.8" fill="#4a3f36" opacity="0.82"/><circle cx="800.8" cy="559.4" r="2.3" fill="#5b4a3a" opacity="0.66"/><circle cx="785.8" cy="560.3" r="0.9" fill="#5b4a3a" opacity="0.61"/><circle cx="795.6" cy="514.1" r="1.4" fill="#2f2a26" opacity="0.89"/><circle cx="784.1" cy="504.2" r="2.2" fill="#2f2a26" opacity="0.61"/><circle cx="784.0" cy="511.9" r="1.6" fill="#3e3832" opacity="0.75"/><circle cx="772.1" cy="573.7" r="2.3" fill="#3e3832" opacity="0.49"/><circle cx="780.2" cy="521.3" r="2.5" fill="#2f2a26" opacity="0.73"/><circle cx="791.8" cy="530.4" r="2.5" fill="#2f2a26" opacity="0.56"/><circle cx="795.4" cy="538.3" r="1.1" fill="#5b4a3a" opacity="0.61"/><circle cx="804.9" cy="574.3" r="2.2" fill="#4a3f36" opacity="0.72"/><circle cx="777.5" cy="466.4" r="0.9" fill="#2f2a26" opacity="0.54"/><circle cx="784.8" cy="501.2" r="2.1" fill="#5b4a3a" opacity="0.75"/><circle cx="794.5" cy="538.4" r="1.5" fill="#4a3f36" opacity="0.66"/><circle cx="777.1" cy="519.9" r="2.4" fill="#5b4a3a" opacity="0.56"/><circle cx="798.3" cy="559.1" r="2.1" fill="#4a3f36" opacity="0.83"/><circle cx="774.9" cy="536.4" r="2.0" fill="#5b4a3a" opacity="0.62"/><circle cx="763.4" cy="561.0" r="0.8" fill="#2f2a26" opacity="0.74"/><circle cx="806.2" cy="536.1" r="2.0" fill="#2f2a26" opacity="0.81"/><circle cx="801.5" cy="546.0" r="2.1" fill="#4a3f36" opacity="0.47"/><circle cx="786.7" cy="495.7" r="1.3" fill="#2f2a26" opacity="0.60"/><circle cx="792.7" cy="498.7" r="2.4" fill="#2f2a26" opacity="0.65"/><circle cx="776.5" cy="544.9" r="2.3" fill="#2f2a26" opacity="0.61"/><circle cx="779.2" cy="530.9" r="2.6" fill="#2f2a26" opacity="0.89"/><circle cx="665.0" cy="646.1" r="1.3" fill="#2f2a26" opacity="0.77"/><circle cx="765.4" cy="747.9" r="0.9" fill="#3e3832" opacity="0.63"/><circle cx="666.3" cy="679.8" r="1.8" fill="#5b4a3a" opacity="0.59"/><circle cx="722.7" cy="690.8" r="2.5" fill="#3e3832" opacity="0.81"/><circle cx="740.6" cy="667.8" r="1.9" fill="#3e3832" opacity="0.55"/><circle cx="680.7" cy="661.2" r="2.1" fill="#3e3832" opacity="0.75"/><circle cx="724.9" cy="667.0" r="0.9" fill="#3e3832" opacity="0.62"/><circle cx="727.1" cy="642.7" r="1.8" fill="#2f2a26" opacity="0.84"/><circle cx="703.7" cy="697.3" r="0.7" fill="#3e3832" opacity="0.67"/><circle cx="635.3" cy="682.2" r="2.2" fill="#5b4a3a" opacity="0.71"/><circle cx="733.2" cy="674.0" r="0.7" fill="#5b4a3a" opacity="0.72"/><circle cx="751.3" cy="688.1" r="1.0" fill="#5b4a3a" opacity="0.70"/><circle cx="734.3" cy="706.9" r="2.4" fill="#3e3832" opacity="0.64"/><circle cx="752.0" cy="692.6" r="2.6" fill="#3e3832" opacity="0.55"/><circle cx="728.6" cy="713.4" r="1.2" fill="#4a3f36" opacity="0.65"/><circle cx="697.1" cy="622.1" r="1.4" fill="#4a3f36" opacity="0.78"/><circle cx="742.5" cy="711.3" r="2.0" fill="#5b4a3a" opacity="0.75"/><circle cx="759.7" cy="647.7" r="0.8" fill="#3e3832" opacity="0.46"/><circle cx="750.5" cy="694.0" r="2.3" fill="#3e3832" opacity="0.63"/><circle cx="681.9" cy="727.5" r="2.5" fill="#5b4a3a" opacity="0.72"/><circle cx="665.5" cy="756.9" r="2.1" fill="#5b4a3a" opacity="0.75"/><circle cx="738.4" cy="732.3" r="1.4" fill="#4a3f36" opacity="0.73"/><circle cx="669.9" cy="704.6" r="2.2" fill="#2f2a26" opacity="0.80"/><circle cx="673.4" cy="679.8" r="0.8" fill="#2f2a26" opacity="0.84"/><circle cx="699.1" cy="684.8" r="1.0" fill="#2f2a26" opacity="0.71"/><circle cx="726.0" cy="686.7" r="1.4" fill="#5b4a3a" opacity="0.72"/><circle cx="750.5" cy="656.9" r="1.2" fill="#3e3832" opacity="0.59"/><circle cx="697.7" cy="707.4" r="2.4" fill="#3e3832" opacity="0.58"/><circle cx="746.7" cy="738.8" r="2.6" fill="#4a3f36" opacity="0.57"/><circle cx="737.7" cy="646.2" r="2.0" fill="#5b4a3a" opacity="0.61"/><circle cx="738.3" cy="709.4" r="2.2" fill="#4a3f36" opacity="0.80"/><circle cx="682.7" cy="606.1" r="1.3" fill="#3e3832" opacity="0.75"/><circle cx="676.8" cy="694.4" r="1.2" fill="#3e3832" opacity="0.81"/><circle cx="685.5" cy="693.2" r="2.2" fill="#3e3832" opacity="0.55"/><circle cx="634.5" cy="659.3" r="2.4" fill="#2f2a26" opacity="0.66"/><circle cx="680.8" cy="679.7" r="1.1" fill="#4a3f36" opacity="0.81"/><circle cx="688.6" cy="728.2" r="1.4" fill="#4a3f36" opacity="0.56"/><circle cx="736.1" cy="673.7" r="2.3" fill="#2f2a26" opacity="0.73"/><circle cx="704.7" cy="673.0" r="1.8" fill="#2f2a26" opacity="0.58"/><circle cx="687.8" cy="681.7" r="1.1" fill="#5b4a3a" opacity="0.71"/><circle cx="718.1" cy="756.6" r="1.2" fill="#3e3832" opacity="0.88"/><circle cx="707.0" cy="634.9" r="2.5" fill="#2f2a26" opacity="0.83"/><circle cx="694.0" cy="694.9" r="0.8" fill="#2f2a26" opacity="0.84"/><circle cx="618.0" cy="708.9" r="2.4" fill="#3e3832" opacity="0.84"/><circle cx="649.5" cy="637.8" r="2.0" fill="#3e3832" opacity="0.57"/><circle cx="654.0" cy="673.1" r="2.5" fill="#5b4a3a" opacity="0.53"/><circle cx="719.8" cy="666.6" r="1.1" fill="#4a3f36" opacity="0.53"/><circle cx="777.8" cy="664.4" r="0.8" fill="#3e3832" opacity="0.83"/><circle cx="758.8" cy="705.4" r="2.0" fill="#5b4a3a" opacity="0.48"/><circle cx="736.0" cy="729.7" r="2.5" fill="#2f2a26" opacity="0.72"/><circle cx="652.5" cy="705.7" r="1.6" fill="#2f2a26" opacity="0.57"/><circle cx="728.5" cy="714.2" r="1.0" fill="#4a3f36" opacity="0.81"/><circle cx="763.4" cy="657.5" r="1.6" fill="#4a3f36" opacity="0.81"/><circle cx="736.5" cy="737.3" r="0.8" fill="#2f2a26" opacity="0.85"/><circle cx="724.3" cy="715.1" r="0.9" fill="#5b4a3a" opacity="0.83"/><circle cx="673.4" cy="666.2" r="1.3" fill="#4a3f36" opacity="0.66"/><circle cx="686.5" cy="678.0" r="1.1" fill="#3e3832" opacity="0.53"/><circle cx="630.0" cy="708.9" r="1.5" fill="#4a3f36" opacity="0.57"/><circle cx="682.7" cy="699.2" r="1.2" fill="#2f2a26" opacity="0.60"/><circle cx="720.1" cy="720.3" r="1.3" fill="#5b4a3a" opacity="0.50"/><circle cx="711.9" cy="688.6" r="2.4" fill="#4a3f36" opacity="0.70"/><circle cx="709.0" cy="677.0" r="2.1" fill="#2f2a26" opacity="0.64"/><circle cx="698.1" cy="712.1" r="1.2" fill="#5b4a3a" opacity="0.58"/><circle cx="709.6" cy="683.7" r="2.1" fill="#2f2a26" opacity="0.51"/><circle cx="675.9" cy="665.1" r="1.7" fill="#4a3f36" opacity="0.65"/><circle cx="720.7" cy="620.3" r="1.2" fill="#2f2a26" opacity="0.65"/><circle cx="720.9" cy="678.9" r="1.8" fill="#4a3f36" opacity="0.83"/><circle cx="674.9" cy="687.1" r="1.0" fill="#3e3832" opacity="0.82"/><circle cx="743.5" cy="658.9" r="2.1" fill="#4a3f36" opacity="0.54"/><circle cx="658.2" cy="659.5" r="2.2" fill="#2f2a26" opacity="0.54"/><circle cx="752.1" cy="709.5" r="1.5" fill="#3e3832" opacity="0.68"/><circle cx="683.6" cy="710.0" r="1.9" fill="#5b4a3a" opacity="0.49"/><circle cx="650.0" cy="717.4" r="1.0" fill="#2f2a26" opacity="0.56"/><circle cx="605.9" cy="656.2" r="0.8" fill="#2f2a26" opacity="0.71"/><circle cx="720.6" cy="668.1" r="2.5" fill="#3e3832" opacity="0.50"/><circle cx="685.8" cy="636.1" r="2.3" fill="#2f2a26" opacity="0.80"/><circle cx="731.0" cy="661.0" r="2.4" fill="#2f2a26" opacity="0.84"/><circle cx="739.2" cy="680.0" r="1.7" fill="#4a3f36" opacity="0.46"/><circle cx="724.4" cy="685.7" r="1.0" fill="#3e3832" opacity="0.59"/><circle cx="618.0" cy="664.5" r="0.7" fill="#4a3f36" opacity="0.57"/><circle cx="726.0" cy="653.6" r="1.6" fill="#4a3f36" opacity="0.77"/><circle cx="756.4" cy="726.5" r="2.1" fill="#3e3832" opacity="0.57"/><circle cx="654.7" cy="698.7" r="2.1" fill="#3e3832" opacity="0.50"/><circle cx="684.2" cy="699.1" r="1.8" fill="#4a3f36" opacity="0.52"/><circle cx="648.0" cy="668.0" r="1.0" fill="#3e3832" opacity="0.87"/><circle cx="672.0" cy="710.2" r="2.3" fill="#3e3832" opacity="0.63"/><circle cx="756.5" cy="671.3" r="1.3" fill="#4a3f36" opacity="0.83"/><circle cx="685.5" cy="633.6" r="1.8" fill="#2f2a26" opacity="0.82"/><circle cx="706.7" cy="681.9" r="1.7" fill="#2f2a26" opacity="0.56"/><circle cx="656.3" cy="710.0" r="1.4" fill="#4a3f36" opacity="0.48"/><circle cx="662.1" cy="704.5" r="0.7" fill="#4a3f36" opacity="0.64"/><circle cx="603.3" cy="752.6" r="1.6" fill="#3e3832" opacity="0.81"/><circle cx="754.4" cy="648.6" r="0.8" fill="#2f2a26" opacity="0.86"/><circle cx="664.9" cy="660.4" r="2.2" fill="#3e3832" opacity="0.73"/><circle cx="699.8" cy="726.4" r="1.5" fill="#3e3832" opacity="0.58"/><circle cx="682.8" cy="730.7" r="0.9" fill="#2f2a26" opacity="0.49"/><circle cx="631.6" cy="652.6" r="1.5" fill="#4a3f36" opacity="0.85"/><circle cx="739.6" cy="670.1" r="1.2" fill="#3e3832" opacity="0.78"/><circle cx="691.1" cy="722.1" r="2.0" fill="#4a3f36" opacity="0.74"/><circle cx="716.6" cy="735.0" r="1.6" fill="#2f2a26" opacity="0.73"/><circle cx="670.4" cy="695.0" r="1.2" fill="#4a3f36" opacity="0.53"/><circle cx="611.3" cy="667.4" r="1.5" fill="#2f2a26" opacity="0.52"/><circle cx="729.6" cy="682.1" r="1.3" fill="#2f2a26" opacity="0.58"/><circle cx="729.2" cy="688.0" r="2.2" fill="#4a3f36" opacity="0.70"/><circle cx="674.5" cy="672.9" r="1.9" fill="#5b4a3a" opacity="0.83"/><circle cx="663.9" cy="730.4" r="1.7" fill="#4a3f36" opacity="0.64"/><circle cx="690.5" cy="675.6" r="1.1" fill="#2f2a26" opacity="0.82"/><circle cx="643.0" cy="684.5" r="2.1" fill="#5b4a3a" opacity="0.57"/><circle cx="666.3" cy="659.0" r="2.0" fill="#5b4a3a" opacity="0.84"/><circle cx="759.6" cy="691.4" r="1.8" fill="#5b4a3a" opacity="0.63"/><circle cx="719.9" cy="689.2" r="2.3" fill="#2f2a26" opacity="0.84"/><circle cx="673.3" cy="671.7" r="1.6" fill="#5b4a3a" opacity="0.58"/><circle cx="680.4" cy="712.4" r="1.7" fill="#5b4a3a" opacity="0.74"/><circle cx="757.9" cy="692.1" r="2.6" fill="#5b4a3a" opacity="0.65"/><circle cx="712.0" cy="713.4" r="1.0" fill="#5b4a3a" opacity="0.71"/><circle cx="767.0" cy="725.4" r="1.3" fill="#4a3f36" opacity="0.88"/><circle cx="710.4" cy="720.3" r="2.4" fill="#3e3832" opacity="0.46"/><circle cx="696.9" cy="753.8" r="1.3" fill="#2f2a26" opacity="0.69"/><circle cx="742.2" cy="689.6" r="1.7" fill="#5b4a3a" opacity="0.63"/><circle cx="670.5" cy="721.4" r="1.4" fill="#3e3832" opacity="0.75"/><circle cx="684.2" cy="687.8" r="1.4" fill="#5b4a3a" opacity="0.74"/><circle cx="718.2" cy="682.5" r="1.1" fill="#5b4a3a" opacity="0.67"/><circle cx="654.4" cy="705.4" r="2.6" fill="#2f2a26" opacity="0.76"/><circle cx="699.7" cy="676.8" r="1.4" fill="#2f2a26" opacity="0.89"/><circle cx="719.3" cy="658.1" r="0.9" fill="#2f2a26" opacity="0.76"/><circle cx="745.7" cy="607.5" r="2.4" fill="#5b4a3a" opacity="0.73"/><circle cx="636.3" cy="681.7" r="1.1" fill="#4a3f36" opacity="0.64"/><circle cx="742.0" cy="704.3" r="0.9" fill="#3e3832" opacity="0.76"/><circle cx="702.6" cy="690.2" r="2.1" fill="#3e3832" opacity="0.86"/><circle cx="687.3" cy="698.2" r="0.7" fill="#3e3832" opacity="0.54"/><circle cx="655.6" cy="690.5" r="1.2" fill="#4a3f36" opacity="0.71"/><circle cx="684.9" cy="698.1" r="1.0" fill="#3e3832" opacity="0.46"/><circle cx="775.5" cy="723.6" r="1.6" fill="#5b4a3a" opacity="0.73"/><circle cx="704.4" cy="679.9" r="0.7" fill="#2f2a26" opacity="0.51"/><circle cx="702.1" cy="714.0" r="0.8" fill="#3e3832" opacity="0.84"/><circle cx="712.0" cy="686.5" r="1.1" fill="#5b4a3a" opacity="0.46"/><circle cx="706.6" cy="719.6" r="2.2" fill="#3e3832" opacity="0.65"/><circle cx="680.7" cy="674.4" r="0.8" fill="#4a3f36" opacity="0.59"/><circle cx="751.8" cy="657.2" r="1.3" fill="#2f2a26" opacity="0.88"/><circle cx="721.1" cy="702.4" r="1.2" fill="#5b4a3a" opacity="0.75"/><circle cx="752.2" cy="681.6" r="1.5" fill="#5b4a3a" opacity="0.46"/><circle cx="775.8" cy="689.0" r="1.0" fill="#5b4a3a" opacity="0.53"/><circle cx="786.3" cy="694.8" r="1.8" fill="#3e3832" opacity="0.60"/><circle cx="782.5" cy="677.1" r="1.9" fill="#3e3832" opacity="0.64"/><circle cx="791.7" cy="676.9" r="1.4" fill="#5b4a3a" opacity="0.58"/><circle cx="770.4" cy="709.3" r="2.0" fill="#2f2a26" opacity="0.81"/><circle cx="770.5" cy="718.4" r="1.1" fill="#4a3f36" opacity="0.70"/><circle cx="735.2" cy="712.8" r="1.2" fill="#2f2a26" opacity="0.61"/><circle cx="766.7" cy="666.5" r="2.5" fill="#4a3f36" opacity="0.58"/><circle cx="756.6" cy="703.6" r="2.3" fill="#4a3f36" opacity="0.87"/><circle cx="796.9" cy="699.4" r="1.5" fill="#2f2a26" opacity="0.69"/><circle cx="750.3" cy="723.7" r="0.9" fill="#3e3832" opacity="0.76"/><circle cx="767.0" cy="640.7" r="0.8" fill="#4a3f36" opacity="0.59"/><circle cx="763.5" cy="709.5" r="1.0" fill="#4a3f36" opacity="0.59"/><circle cx="765.0" cy="685.7" r="1.8" fill="#2f2a26" opacity="0.81"/><circle cx="770.7" cy="677.1" r="2.1" fill="#3e3832" opacity="0.55"/><circle cx="792.3" cy="739.6" r="1.2" fill="#5b4a3a" opacity="0.83"/><circle cx="742.6" cy="710.9" r="1.9" fill="#4a3f36" opacity="0.87"/><circle cx="778.5" cy="729.9" r="2.2" fill="#2f2a26" opacity="0.85"/><circle cx="800.8" cy="708.6" r="1.6" fill="#5b4a3a" opacity="0.61"/><circle cx="761.3" cy="684.0" r="0.9" fill="#4a3f36" opacity="0.77"/><circle cx="775.5" cy="702.5" r="1.0" fill="#4a3f36" opacity="0.79"/><circle cx="788.2" cy="747.6" r="1.7" fill="#4a3f36" opacity="0.70"/><circle cx="773.3" cy="740.7" r="1.7" fill="#5b4a3a" opacity="0.75"/><circle cx="728.3" cy="662.7" r="0.9" fill="#2f2a26" opacity="0.86"/><circle cx="788.8" cy="667.2" r="2.0" fill="#4a3f36" opacity="0.76"/><circle cx="787.0" cy="707.1" r="2.2" fill="#2f2a26" opacity="0.79"/><circle cx="796.4" cy="727.8" r="1.4" fill="#4a3f36" opacity="0.58"/><circle cx="729.0" cy="737.1" r="2.0" fill="#5b4a3a" opacity="0.68"/><circle cx="764.0" cy="678.7" r="2.0" fill="#4a3f36" opacity="0.67"/><circle cx="781.6" cy="660.1" r="1.0" fill="#4a3f36" opacity="0.89"/><circle cx="753.7" cy="666.6" r="1.2" fill="#3e3832" opacity="0.53"/><circle cx="764.9" cy="712.6" r="1.9" fill="#4a3f36" opacity="0.51"/><circle cx="762.0" cy="649.8" r="1.2" fill="#4a3f36" opacity="0.45"/><circle cx="766.2" cy="682.5" r="1.9" fill="#2f2a26" opacity="0.51"/><circle cx="763.0" cy="655.1" r="1.2" fill="#3e3832" opacity="0.70"/><circle cx="770.8" cy="678.7" r="2.0" fill="#5b4a3a" opacity="0.83"/><circle cx="758.7" cy="713.2" r="2.0" fill="#3e3832" opacity="0.61"/><circle cx="771.9" cy="711.9" r="1.2" fill="#4a3f36" opacity="0.50"/><circle cx="781.5" cy="732.2" r="1.8" fill="#2f2a26" opacity="0.53"/><circle cx="772.7" cy="702.3" r="2.6" fill="#5b4a3a" opacity="0.49"/><circle cx="758.5" cy="604.0" r="1.8" fill="#3e3832" opacity="0.74"/><circle cx="792.3" cy="689.1" r="2.2" fill="#2f2a26" opacity="0.45"/><circle cx="795.2" cy="675.6" r="1.9" fill="#2f2a26" opacity="0.74"/><circle cx="799.3" cy="727.4" r="0.7" fill="#5b4a3a" opacity="0.83"/><circle cx="766.3" cy="721.5" r="1.9" fill="#4a3f36" opacity="0.50"/><circle cx="766.6" cy="670.4" r="1.9" fill="#5b4a3a" opacity="0.53"/><circle cx="778.0" cy="672.6" r="1.4" fill="#2f2a26" opacity="0.83"/><circle cx="769.8" cy="712.1" r="0.9" fill="#5b4a3a" opacity="0.86"/><circle cx="792.0" cy="686.1" r="1.6" fill="#4a3f36" opacity="0.90"/><circle cx="747.6" cy="670.5" r="1.0" fill="#4a3f36" opacity="0.52"/><circle cx="720.4" cy="732.4" r="0.9" fill="#3e3832" opacity="0.83"/><circle cx="756.1" cy="703.2" r="1.4" fill="#3e3832" opacity="0.83"/><circle cx="791.6" cy="651.4" r="1.5" fill="#2f2a26" opacity="0.48"/><circle cx="799.6" cy="718.8" r="2.4" fill="#3e3832" opacity="0.65"/><circle cx="751.2" cy="643.4" r="2.4" fill="#4a3f36" opacity="0.62"/><circle cx="758.3" cy="659.6" r="1.6" fill="#2f2a26" opacity="0.68"/><circle cx="747.7" cy="718.8" r="1.9" fill="#4a3f36" opacity="0.89"/><circle cx="797.0" cy="688.4" r="2.2" fill="#3e3832" opacity="0.78"/><circle cx="755.6" cy="744.7" r="1.8" fill="#5b4a3a" opacity="0.88"/><circle cx="741.3" cy="706.1" r="1.3" fill="#2f2a26" opacity="0.69"/><circle cx="744.1" cy="649.4" r="1.1" fill="#5b4a3a" opacity="0.76"/><circle cx="785.9" cy="736.7" r="1.8" fill="#5b4a3a" opacity="0.61"/><circle cx="771.3" cy="737.7" r="1.2" fill="#4a3f36" opacity="0.53"/><circle cx="789.4" cy="671.9" r="0.9" fill="#2f2a26" opacity="0.74"/><circle cx="781.4" cy="748.2" r="2.0" fill="#4a3f36" opacity="0.70"/><circle cx="773.8" cy="745.1" r="0.9" fill="#3e3832" opacity="0.83"/><circle cx="754.6" cy="643.2" r="1.0" fill="#3e3832" opacity="0.73"/><circle cx="793.3" cy="689.6" r="1.6" fill="#5b4a3a" opacity="0.69"/><circle cx="782.8" cy="695.4" r="1.6" fill="#3e3832" opacity="0.51"/><circle cx="771.1" cy="688.1" r="1.2" fill="#2f2a26" opacity="0.47"/><circle cx="755.2" cy="616.6" r="1.6" fill="#3e3832" opacity="0.77"/><circle cx="732.5" cy="732.9" r="1.9" fill="#4a3f36" opacity="0.70"/><circle cx="805.1" cy="664.9" r="1.0" fill="#2f2a26" opacity="0.81"/><circle cx="639.8" cy="685.4" r="1.2" fill="#4a3f36" opacity="0.62"/><circle cx="636.5" cy="617.3" r="2.1" fill="#3e3832" opacity="0.82"/><circle cx="629.8" cy="712.4" r="1.3" fill="#3e3832" opacity="0.47"/><circle cx="651.3" cy="678.0" r="1.4" fill="#5b4a3a" opacity="0.46"/><circle cx="659.3" cy="687.7" r="2.2" fill="#5b4a3a" opacity="0.50"/><circle cx="643.6" cy="671.8" r="1.8" fill="#2f2a26" opacity="0.84"/><circle cx="623.4" cy="640.1" r="1.8" fill="#2f2a26" opacity="0.69"/><circle cx="627.9" cy="639.4" r="2.5" fill="#3e3832" opacity="0.46"/><circle cx="660.8" cy="688.8" r="1.6" fill="#3e3832" opacity="0.81"/><circle cx="651.1" cy="694.2" r="2.3" fill="#5b4a3a" opacity="0.83"/><circle cx="667.1" cy="680.7" r="1.6" fill="#4a3f36" opacity="0.84"/><circle cx="634.5" cy="682.4" r="1.3" fill="#4a3f36" opacity="0.59"/><circle cx="657.1" cy="720.8" r="1.1" fill="#2f2a26" opacity="0.78"/><circle cx="630.1" cy="719.4" r="2.5" fill="#2f2a26" opacity="0.45"/><circle cx="625.7" cy="677.1" r="0.7" fill="#5b4a3a" opacity="0.84"/><circle cx="620.3" cy="663.3" r="2.1" fill="#4a3f36" opacity="0.57"/><circle cx="636.9" cy="724.9" r="1.2" fill="#4a3f36" opacity="0.90"/><circle cx="662.6" cy="698.2" r="2.2" fill="#4a3f36" opacity="0.80"/><circle cx="622.9" cy="658.4" r="1.4" fill="#2f2a26" opacity="0.81"/><circle cx="642.4" cy="743.4" r="1.0" fill="#3e3832" opacity="0.59"/><circle cx="642.5" cy="641.0" r="1.7" fill="#4a3f36" opacity="0.61"/><circle cx="622.6" cy="680.4" r="0.8" fill="#2f2a26" opacity="0.75"/><circle cx="663.4" cy="655.0" r="1.7" fill="#4a3f36" opacity="0.81"/><circle cx="650.3" cy="689.6" r="1.1" fill="#5b4a3a" opacity="0.63"/><circle cx="615.4" cy="721.4" r="2.5" fill="#3e3832" opacity="0.51"/><circle cx="637.4" cy="667.5" r="1.8" fill="#2f2a26" opacity="0.48"/><circle cx="655.0" cy="753.5" r="1.8" fill="#2f2a26" opacity="0.71"/><circle cx="656.9" cy="687.8" r="2.2" fill="#5b4a3a" opacity="0.77"/><circle cx="670.3" cy="663.0" r="1.3" fill="#4a3f36" opacity="0.57"/><circle cx="639.8" cy="696.5" r="1.0" fill="#2f2a26" opacity="0.56"/><circle cx="645.6" cy="691.2" r="1.6" fill="#2f2a26" opacity="0.84"/><circle cx="632.9" cy="674.1" r="2.1" fill="#4a3f36" opacity="0.72"/><circle cx="668.8" cy="716.1" r="2.4" fill="#2f2a26" opacity="0.77"/><circle cx="654.3" cy="690.8" r="1.9" fill="#3e3832" opacity="0.74"/><circle cx="651.0" cy="680.3" r="1.3" fill="#3e3832" opacity="0.74"/><circle cx="617.5" cy="715.3" r="1.3" fill="#3e3832" opacity="0.84"/><circle cx="642.2" cy="677.7" r="1.9" fill="#5b4a3a" opacity="0.89"/><circle cx="605.5" cy="732.0" r="2.4" fill="#3e3832" opacity="0.87"/><circle cx="591.0" cy="655.2" r="0.8" fill="#2f2a26" opacity="0.52"/><circle cx="652.3" cy="692.4" r="1.7" fill="#3e3832" opacity="0.61"/><circle cx="629.3" cy="711.0" r="2.0" fill="#4a3f36" opacity="0.75"/><circle cx="627.0" cy="674.0" r="2.1" fill="#2f2a26" opacity="0.82"/><circle cx="635.5" cy="691.1" r="1.9" fill="#5b4a3a" opacity="0.70"/><circle cx="625.8" cy="718.2" r="1.2" fill="#2f2a26" opacity="0.45"/><circle cx="614.0" cy="696.6" r="2.2" fill="#2f2a26" opacity="0.52"/><circle cx="627.4" cy="668.0" r="2.6" fill="#3e3832" opacity="0.73"/><circle cx="656.2" cy="716.1" r="1.1" fill="#4a3f36" opacity="0.57"/><circle cx="616.9" cy="659.7" r="2.4" fill="#4a3f36" opacity="0.69"/><circle cx="623.2" cy="728.0" r="1.5" fill="#5b4a3a" opacity="0.55"/><circle cx="673.0" cy="656.2" r="1.4" fill="#4a3f36" opacity="0.60"/><circle cx="647.1" cy="681.8" r="2.1" fill="#3e3832" opacity="0.81"/><circle cx="663.1" cy="666.8" r="1.4" fill="#4a3f36" opacity="0.70"/><circle cx="605.9" cy="726.1" r="2.5" fill="#4a3f36" opacity="0.46"/><circle cx="668.1" cy="696.1" r="1.2" fill="#2f2a26" opacity="0.54"/><circle cx="641.5" cy="647.0" r="1.3" fill="#5b4a3a" opacity="0.55"/><circle cx="630.5" cy="682.6" r="2.3" fill="#2f2a26" opacity="0.88"/><circle cx="649.9" cy="709.2" r="0.9" fill="#3e3832" opacity="0.67"/><circle cx="648.3" cy="678.7" r="2.0" fill="#5b4a3a" opacity="0.55"/><circle cx="669.8" cy="706.8" r="2.3" fill="#2f2a26" opacity="0.47"/><circle cx="642.9" cy="658.1" r="1.5" fill="#4a3f36" opacity="0.90"/><circle cx="768.7" cy="484.7" r="0.9" fill="#3e3832" opacity="0.51"/><circle cx="762.3" cy="504.6" r="1.4" fill="#4a3f36" opacity="0.66"/><circle cx="753.5" cy="493.7" r="1.9" fill="#5b4a3a" opacity="0.85"/><circle cx="775.1" cy="479.3" r="1.1" fill="#3e3832" opacity="0.47"/><circle cx="755.5" cy="479.5" r="1.5" fill="#3e3832" opacity="0.78"/><circle cx="810.4" cy="493.9" r="0.8" fill="#3e3832" opacity="0.50"/><circle cx="759.2" cy="480.9" r="1.5" fill="#4a3f36" opacity="0.55"/><circle cx="742.6" cy="472.2" r="1.7" fill="#3e3832" opacity="0.69"/><circle cx="816.9" cy="507.3" r="2.3" fill="#4a3f36" opacity="0.78"/><circle cx="768.2" cy="493.6" r="1.2" fill="#3e3832" opacity="0.88"/><circle cx="772.1" cy="486.5" r="2.2" fill="#2f2a26" opacity="0.57"/><circle cx="767.3" cy="485.7" r="1.6" fill="#2f2a26" opacity="0.70"/><circle cx="755.9" cy="491.4" r="1.5" fill="#4a3f36" opacity="0.62"/><circle cx="754.6" cy="494.9" r="1.0" fill="#3e3832" opacity="0.56"/><circle cx="710.1" cy="479.6" r="2.0" fill="#5b4a3a" opacity="0.90"/><circle cx="793.8" cy="495.9" r="0.8" fill="#3e3832" opacity="0.63"/><circle cx="741.6" cy="468.0" r="1.5" fill="#2f2a26" opacity="0.65"/><circle cx="750.0" cy="468.3" r="1.9" fill="#5b4a3a" opacity="0.68"/><circle cx="715.8" cy="440.9" r="1.1" fill="#5b4a3a" opacity="0.61"/><circle cx="767.0" cy="512.1" r="2.3" fill="#3e3832" opacity="0.73"/><circle cx="756.3" cy="475.8" r="1.9" fill="#2f2a26" opacity="0.57"/><circle cx="754.6" cy="504.0" r="1.8" fill="#4a3f36" opacity="0.48"/><circle cx="770.9" cy="459.1" r="1.1" fill="#4a3f36" opacity="0.82"/><circle cx="770.9" cy="493.5" r="2.3" fill="#5b4a3a" opacity="0.53"/><circle cx="744.6" cy="440.5" r="1.3" fill="#2f2a26" opacity="0.82"/><circle cx="774.2" cy="469.7" r="1.0" fill="#2f2a26" opacity="0.62"/><circle cx="750.5" cy="504.4" r="1.7" fill="#2f2a26" opacity="0.65"/><circle cx="787.1" cy="491.6" r="2.6" fill="#3e3832" opacity="0.65"/><circle cx="734.5" cy="485.3" r="2.1" fill="#4a3f36" opacity="0.45"/><circle cx="785.8" cy="498.6" r="2.0" fill="#2f2a26" opacity="0.69"/><circle cx="774.9" cy="464.1" r="1.8" fill="#3e3832" opacity="0.71"/><circle cx="781.7" cy="484.9" r="2.1" fill="#2f2a26" opacity="0.86"/><circle cx="769.4" cy="497.3" r="1.5" fill="#5b4a3a" opacity="0.84"/><path d="M613 468 C600 520 612 565 652 596 C690 622 748 628 792 606 C808 597 815 588 819 580" fill="none" stroke="#8c887a" stroke-width="6"/><path d="M613 468 C600 520 612 565 652 596 C690 622 748 628 792 606 C808 597 815 588 819 580" fill="none" stroke="#3c3a34" stroke-width="1.5"/><circle cx="735" cy="598" r="20" fill="#d9ddd0"/><circle cx="738" cy="600" r="12.4" fill="#4a463e"/><circle cx="738" cy="600" r="7.0" fill="#1c1a17"/><circle cx="787" cy="593" r="17" fill="#d9ddd0"/><circle cx="790" cy="595" r="10.5" fill="#4a463e"/><circle cx="790" cy="595" r="5.9" fill="#1c1a17"/><ellipse cx="607" cy="625" rx="24" ry="48" fill="#6c6a62"/><ellipse cx="598" cy="625" rx="18" ry="40" fill="#8c5a48"/><path d="M596 610 L552 608 C536 608 528 620 527 640 L524 722 L556 722 L556 668 C556 660 562 655 572 655 L596 652 Z" fill="url(#rbRustV)"/><path d="M552 608 C536 608 528 620 527 640 L540 641 C541 628 546 622 556 621 L596 622 L596 610 Z" fill="#b07860" opacity="0.75"/><path d="M527 640 L556 641" stroke="#5e3422" stroke-width="2" opacity="0.6"/><path d="M818 604 C830 596 852 596 854 616 C856 632 850 640 844 642 L834 697 L813 695 L818 640 L818 636 Z" fill="url(#rbRustV)"/><path d="M822 600 C835 596 850 600 852 612 L830 614 Z" fill="#b57a55" opacity="0.7"/><path d="M500 712 L562 712 L562 768 L500 768Z" fill="#7d9582"/><ellipse cx="508" cy="740" rx="10" ry="30" fill="#8aa28f" stroke="#56665a" stroke-width="3"/><ellipse cx="555" cy="740" rx="8" ry="28" fill="#7f9885" stroke="#56665a" stroke-width="3"/><path d="M505 765 C515 755 545 755 552 765 L557 890 C545 898 490 898 479 890Z" fill="url(#rbArm)"/><circle cx="545.2" cy="859.4" r="1.7" fill="#5a4a40" opacity="0.46"/><circle cx="529.8" cy="868.5" r="2.0" fill="#3f3a36" opacity="0.78"/><circle cx="522.4" cy="820.1" r="1.0" fill="#4a4540" opacity="0.74"/><circle cx="508.4" cy="885.8" r="2.1" fill="#5a4a40" opacity="0.75"/><circle cx="521.0" cy="835.7" r="1.0" fill="#4a4540" opacity="0.43"/><circle cx="493.5" cy="828.9" r="1.2" fill="#3f3a36" opacity="0.65"/><circle cx="494.2" cy="880.6" r="1.9" fill="#3f3a36" opacity="0.59"/><circle cx="550.9" cy="809.2" r="1.5" fill="#5a4a40" opacity="0.79"/><circle cx="538.8" cy="856.5" r="1.3" fill="#3f3a36" opacity="0.46"/><circle cx="501.8" cy="827.2" r="1.4" fill="#5a4a40" opacity="0.65"/><circle cx="515.5" cy="881.9" r="1.2" fill="#3f3a36" opacity="0.76"/><circle cx="536.5" cy="825.7" r="1.0" fill="#5a4a40" opacity="0.72"/><circle cx="545.1" cy="878.4" r="1.6" fill="#5a4a40" opacity="0.49"/><circle cx="519.3" cy="829.9" r="1.6" fill="#3f3a36" opacity="0.53"/><circle cx="537.0" cy="826.0" r="1.2" fill="#3f3a36" opacity="0.63"/><circle cx="485.9" cy="870.8" r="1.8" fill="#4a4540" opacity="0.80"/><circle cx="488.3" cy="837.5" r="0.7" fill="#3f3a36" opacity="0.45"/><circle cx="548.3" cy="774.3" r="1.4" fill="#5a4a40" opacity="0.46"/><circle cx="496.4" cy="878.9" r="1.3" fill="#3f3a36" opacity="0.69"/><circle cx="489.0" cy="769.1" r="0.7" fill="#4a4540" opacity="0.52"/><circle cx="490.0" cy="886.4" r="1.8" fill="#3f3a36" opacity="0.66"/><circle cx="510.1" cy="765.8" r="2.2" fill="#4a4540" opacity="0.79"/><circle cx="529.0" cy="860.9" r="1.1" fill="#5a4a40" opacity="0.36"/><circle cx="515.0" cy="863.4" r="1.8" fill="#5a4a40" opacity="0.69"/><circle cx="547.3" cy="855.2" r="1.4" fill="#4a4540" opacity="0.39"/><circle cx="533.6" cy="873.2" r="0.6" fill="#4a4540" opacity="0.58"/><circle cx="540.9" cy="825.7" r="1.1" fill="#5a4a40" opacity="0.47"/><circle cx="527.3" cy="816.7" r="0.6" fill="#3f3a36" opacity="0.78"/><circle cx="532.3" cy="794.2" r="0.8" fill="#4a4540" opacity="0.39"/><circle cx="529.5" cy="828.6" r="2.2" fill="#4a4540" opacity="0.80"/><circle cx="498.1" cy="820.0" r="1.0" fill="#3f3a36" opacity="0.45"/><circle cx="541.7" cy="844.2" r="1.2" fill="#3f3a36" opacity="0.54"/><circle cx="488.7" cy="857.7" r="1.0" fill="#4a4540" opacity="0.36"/><circle cx="538.5" cy="774.2" r="0.6" fill="#3f3a36" opacity="0.56"/><circle cx="504.2" cy="846.6" r="0.9" fill="#4a4540" opacity="0.68"/><circle cx="513.8" cy="829.1" r="1.5" fill="#4a4540" opacity="0.75"/><circle cx="551.8" cy="849.5" r="1.4" fill="#4a4540" opacity="0.58"/><circle cx="551.9" cy="842.4" r="1.1" fill="#5a4a40" opacity="0.49"/><circle cx="548.2" cy="815.7" r="0.8" fill="#4a4540" opacity="0.73"/><circle cx="515.2" cy="815.4" r="1.4" fill="#4a4540" opacity="0.75"/><circle cx="536.4" cy="789.6" r="1.4" fill="#4a4540" opacity="0.61"/><circle cx="510.6" cy="822.5" r="1.8" fill="#5a4a40" opacity="0.75"/><circle cx="499.8" cy="776.6" r="1.6" fill="#5a4a40" opacity="0.64"/><circle cx="540.6" cy="857.7" r="1.4" fill="#5a4a40" opacity="0.78"/><circle cx="491.0" cy="810.6" r="1.4" fill="#5a4a40" opacity="0.67"/><circle cx="536.8" cy="816.6" r="1.4" fill="#3f3a36" opacity="0.48"/><circle cx="498.1" cy="826.0" r="1.0" fill="#5a4a40" opacity="0.66"/><circle cx="534.5" cy="771.4" r="1.8" fill="#3f3a36" opacity="0.39"/><circle cx="491.4" cy="816.3" r="0.7" fill="#4a4540" opacity="0.76"/><circle cx="533.1" cy="869.3" r="0.7" fill="#5a4a40" opacity="0.53"/><circle cx="535.3" cy="879.5" r="1.1" fill="#4a4540" opacity="0.59"/><circle cx="488.7" cy="833.0" r="2.1" fill="#5a4a40" opacity="0.39"/><circle cx="520.3" cy="856.6" r="1.0" fill="#4a4540" opacity="0.56"/><circle cx="534.9" cy="814.6" r="2.2" fill="#3f3a36" opacity="0.68"/><circle cx="516.4" cy="857.0" r="1.9" fill="#5a4a40" opacity="0.75"/><circle cx="494.1" cy="828.9" r="1.4" fill="#5a4a40" opacity="0.46"/><circle cx="537.0" cy="815.6" r="1.6" fill="#5a4a40" opacity="0.78"/><circle cx="505.8" cy="860.7" r="1.7" fill="#3f3a36" opacity="0.45"/><circle cx="528.5" cy="814.4" r="1.7" fill="#3f3a36" opacity="0.76"/><circle cx="504.4" cy="830.7" r="2.1" fill="#5a4a40" opacity="0.64"/><path d="M485 888 L500 888 L505 915 L492 935 L500 955 L508 962 L504 968 L488 960 L476 935 L470 918Z" fill="#7d4530"/><path d="M538 888 L552 888 L560 925 L550 945 L540 940 L546 920Z" fill="#7d4530"/><path d="M806 688 L850 688 L852 738 L806 738Z" fill="#7d9582"/><ellipse cx="845" cy="712" rx="8" ry="28" fill="#8aa28f" stroke="#56665a" stroke-width="3"/><path d="M800 735 C808 728 840 728 848 735 L853 840 C840 848 800 848 787 840Z" fill="url(#rbArm)"/><circle cx="803.7" cy="792.6" r="1.2" fill="#3f3a36" opacity="0.56"/><circle cx="826.3" cy="799.6" r="2.1" fill="#5a4a40" opacity="0.47"/><circle cx="819.0" cy="826.2" r="1.4" fill="#3f3a36" opacity="0.74"/><circle cx="803.3" cy="747.4" r="2.1" fill="#5a4a40" opacity="0.68"/><circle cx="832.3" cy="737.4" r="1.8" fill="#3f3a36" opacity="0.37"/><circle cx="839.5" cy="824.7" r="1.0" fill="#3f3a36" opacity="0.67"/><circle cx="846.0" cy="812.1" r="2.1" fill="#5a4a40" opacity="0.68"/><circle cx="796.9" cy="772.0" r="0.7" fill="#5a4a40" opacity="0.45"/><circle cx="829.4" cy="764.6" r="1.4" fill="#5a4a40" opacity="0.61"/><circle cx="823.3" cy="776.9" r="1.0" fill="#5a4a40" opacity="0.66"/><circle cx="849.3" cy="828.5" r="2.2" fill="#3f3a36" opacity="0.66"/><circle cx="834.1" cy="767.5" r="1.5" fill="#3f3a36" opacity="0.61"/><circle cx="835.1" cy="754.3" r="1.9" fill="#3f3a36" opacity="0.47"/><circle cx="796.2" cy="785.4" r="1.6" fill="#5a4a40" opacity="0.39"/><circle cx="840.8" cy="777.2" r="0.8" fill="#5a4a40" opacity="0.54"/><circle cx="815.4" cy="743.7" r="1.6" fill="#4a4540" opacity="0.52"/><circle cx="826.7" cy="793.3" r="2.1" fill="#5a4a40" opacity="0.58"/><circle cx="793.1" cy="799.0" r="0.7" fill="#4a4540" opacity="0.79"/><circle cx="807.2" cy="760.3" r="1.7" fill="#5a4a40" opacity="0.49"/><circle cx="812.9" cy="782.9" r="1.4" fill="#3f3a36" opacity="0.74"/><circle cx="832.9" cy="741.8" r="2.2" fill="#3f3a36" opacity="0.47"/><circle cx="829.9" cy="812.3" r="2.1" fill="#5a4a40" opacity="0.79"/><circle cx="822.4" cy="793.1" r="0.6" fill="#5a4a40" opacity="0.79"/><circle cx="808.8" cy="773.3" r="1.5" fill="#4a4540" opacity="0.38"/><circle cx="829.4" cy="783.6" r="1.7" fill="#5a4a40" opacity="0.62"/><circle cx="806.4" cy="786.3" r="1.5" fill="#3f3a36" opacity="0.36"/><circle cx="812.4" cy="802.2" r="1.1" fill="#3f3a36" opacity="0.49"/><circle cx="812.0" cy="766.0" r="1.2" fill="#3f3a36" opacity="0.47"/><circle cx="840.0" cy="742.1" r="1.9" fill="#3f3a36" opacity="0.66"/><circle cx="796.7" cy="787.5" r="1.6" fill="#5a4a40" opacity="0.46"/><circle cx="800.4" cy="780.1" r="1.7" fill="#4a4540" opacity="0.62"/><circle cx="802.8" cy="823.1" r="2.1" fill="#4a4540" opacity="0.50"/><circle cx="830.9" cy="831.8" r="1.3" fill="#4a4540" opacity="0.70"/><circle cx="808.8" cy="826.2" r="1.5" fill="#5a4a40" opacity="0.50"/><circle cx="842.6" cy="739.8" r="1.6" fill="#3f3a36" opacity="0.41"/><circle cx="807.3" cy="821.3" r="1.0" fill="#5a4a40" opacity="0.64"/><circle cx="807.2" cy="795.4" r="0.7" fill="#5a4a40" opacity="0.42"/><circle cx="816.7" cy="839.3" r="2.1" fill="#4a4540" opacity="0.36"/><circle cx="818.1" cy="816.6" r="1.8" fill="#5a4a40" opacity="0.59"/><circle cx="846.7" cy="829.1" r="2.0" fill="#5a4a40" opacity="0.40"/><circle cx="841.0" cy="788.9" r="0.9" fill="#5a4a40" opacity="0.61"/><circle cx="799.3" cy="764.5" r="1.7" fill="#3f3a36" opacity="0.59"/><circle cx="795.5" cy="744.4" r="2.2" fill="#3f3a36" opacity="0.56"/><circle cx="839.6" cy="770.5" r="0.9" fill="#3f3a36" opacity="0.75"/><circle cx="795.9" cy="757.5" r="1.0" fill="#4a4540" opacity="0.72"/><path d="M785 840 L800 840 L796 880 L800 893 L790 896 L782 870Z" fill="#7a4430"/><path d="M828 840 L846 840 L840 880 L825 905 L812 906 L812 895 L826 878Z" fill="#7a4430"/><path d="M613 860 L762 860 L762 908 C730 915 650 915 613 908Z" fill="url(#rbRust)"/><path d="M597 822 L780 822 L779 862 C740 870 640 870 598 862Z" fill="url(#rbRust)"/><path d="M586 760 C640 770 740 770 792 758 L790 828 C740 840 645 840 597 828Z" fill="url(#rbRust)"/><path d="M598 862 C640 870 740 870 779 862" fill="none" stroke="#c9b6a0" stroke-width="1.5" opacity="0.7"/><path d="M597 828 C645 840 740 840 790 828" fill="none" stroke="#c9b6a0" stroke-width="1.5" opacity="0.7"/><circle cx="682.6" cy="843.4" r="1.7" fill="#5a2e1a" opacity="0.48"/><circle cx="757.9" cy="791.6" r="1.6" fill="#5a2e1a" opacity="0.55"/><circle cx="746.3" cy="778.2" r="1.0" fill="#c78a52" opacity="0.52"/><circle cx="764.5" cy="853.8" r="1.3" fill="#5a2e1a" opacity="0.69"/><circle cx="720.3" cy="851.2" r="0.8" fill="#c78a52" opacity="0.63"/><circle cx="609.8" cy="770.0" r="1.7" fill="#b87444" opacity="0.31"/><circle cx="684.8" cy="826.7" r="1.6" fill="#b87444" opacity="0.39"/><circle cx="613.9" cy="856.7" r="1.1" fill="#b87444" opacity="0.70"/><circle cx="755.1" cy="864.1" r="1.0" fill="#c78a52" opacity="0.51"/><circle cx="603.6" cy="843.8" r="0.7" fill="#c78a52" opacity="0.64"/><circle cx="670.3" cy="899.1" r="1.6" fill="#c78a52" opacity="0.39"/><circle cx="771.4" cy="772.3" r="1.1" fill="#b87444" opacity="0.46"/><circle cx="611.7" cy="853.1" r="1.5" fill="#5a2e1a" opacity="0.43"/><circle cx="674.7" cy="894.2" r="0.8" fill="#b87444" opacity="0.34"/><circle cx="631.2" cy="843.3" r="1.1" fill="#c78a52" opacity="0.69"/><circle cx="741.9" cy="823.7" r="1.1" fill="#5a2e1a" opacity="0.47"/><circle cx="637.8" cy="802.8" r="1.8" fill="#b87444" opacity="0.42"/><circle cx="763.5" cy="794.5" r="1.1" fill="#b87444" opacity="0.56"/><circle cx="616.8" cy="903.5" r="0.9" fill="#5a2e1a" opacity="0.30"/><circle cx="712.1" cy="881.2" r="1.1" fill="#c78a52" opacity="0.34"/><circle cx="707.0" cy="799.0" r="1.3" fill="#5a2e1a" opacity="0.55"/><circle cx="621.8" cy="847.2" r="1.6" fill="#c78a52" opacity="0.65"/><circle cx="632.2" cy="786.6" r="1.7" fill="#b87444" opacity="0.40"/><circle cx="633.5" cy="868.5" r="1.7" fill="#c78a52" opacity="0.57"/><circle cx="670.6" cy="832.6" r="0.7" fill="#c78a52" opacity="0.34"/><circle cx="642.6" cy="863.6" r="0.9" fill="#b87444" opacity="0.50"/><circle cx="695.3" cy="895.1" r="1.8" fill="#c78a52" opacity="0.39"/><circle cx="702.6" cy="884.3" r="1.3" fill="#5a2e1a" opacity="0.38"/><circle cx="610.9" cy="822.6" r="0.9" fill="#c78a52" opacity="0.37"/><circle cx="667.0" cy="845.1" r="0.8" fill="#5a2e1a" opacity="0.36"/><circle cx="682.2" cy="811.3" r="1.5" fill="#b87444" opacity="0.53"/><circle cx="624.2" cy="769.9" r="0.6" fill="#5a2e1a" opacity="0.58"/><circle cx="717.0" cy="832.5" r="1.5" fill="#5a2e1a" opacity="0.35"/><circle cx="611.5" cy="828.4" r="1.0" fill="#c78a52" opacity="0.66"/><circle cx="735.8" cy="863.5" r="1.6" fill="#5a2e1a" opacity="0.44"/><circle cx="726.1" cy="891.1" r="1.6" fill="#5a2e1a" opacity="0.68"/><circle cx="603.7" cy="835.0" r="0.6" fill="#b87444" opacity="0.45"/><circle cx="707.0" cy="850.2" r="0.7" fill="#b87444" opacity="0.35"/><circle cx="646.1" cy="823.3" r="1.0" fill="#b87444" opacity="0.58"/><circle cx="683.6" cy="829.8" r="1.2" fill="#b87444" opacity="0.60"/><circle cx="603.6" cy="849.2" r="1.2" fill="#c78a52" opacity="0.68"/><circle cx="619.1" cy="874.2" r="1.4" fill="#5a2e1a" opacity="0.40"/><circle cx="600.1" cy="807.1" r="1.4" fill="#c78a52" opacity="0.51"/><circle cx="739.0" cy="813.0" r="1.7" fill="#5a2e1a" opacity="0.66"/><circle cx="659.1" cy="858.2" r="0.8" fill="#5a2e1a" opacity="0.62"/><circle cx="739.1" cy="793.0" r="0.9" fill="#c78a52" opacity="0.53"/><circle cx="657.2" cy="784.1" r="1.2" fill="#c78a52" opacity="0.58"/><circle cx="775.7" cy="803.8" r="0.8" fill="#5a2e1a" opacity="0.49"/><circle cx="669.5" cy="837.8" r="1.4" fill="#b87444" opacity="0.64"/><circle cx="612.0" cy="769.4" r="1.6" fill="#c78a52" opacity="0.57"/><circle cx="650.6" cy="814.6" r="1.4" fill="#b87444" opacity="0.31"/><circle cx="623.4" cy="828.7" r="0.6" fill="#5a2e1a" opacity="0.39"/><circle cx="624.3" cy="771.6" r="1.4" fill="#5a2e1a" opacity="0.34"/><circle cx="698.1" cy="854.6" r="1.0" fill="#c78a52" opacity="0.57"/><circle cx="635.3" cy="831.5" r="0.8" fill="#c78a52" opacity="0.60"/><circle cx="698.0" cy="770.1" r="0.9" fill="#5a2e1a" opacity="0.52"/><circle cx="775.1" cy="835.1" r="1.8" fill="#c78a52" opacity="0.46"/><circle cx="746.1" cy="891.9" r="0.7" fill="#b87444" opacity="0.46"/><circle cx="682.2" cy="792.6" r="1.7" fill="#c78a52" opacity="0.45"/><circle cx="704.4" cy="888.1" r="1.6" fill="#5a2e1a" opacity="0.49"/><circle cx="719.8" cy="793.7" r="1.5" fill="#b87444" opacity="0.67"/><circle cx="621.1" cy="798.9" r="1.1" fill="#c78a52" opacity="0.69"/><circle cx="698.4" cy="875.7" r="1.0" fill="#b87444" opacity="0.64"/><circle cx="663.2" cy="776.6" r="1.1" fill="#b87444" opacity="0.47"/><circle cx="649.5" cy="893.8" r="0.9" fill="#c78a52" opacity="0.47"/><circle cx="604.6" cy="839.6" r="1.4" fill="#c78a52" opacity="0.49"/><circle cx="694.9" cy="859.9" r="1.1" fill="#5a2e1a" opacity="0.53"/><circle cx="726.9" cy="871.1" r="1.1" fill="#b87444" opacity="0.42"/><circle cx="734.3" cy="854.4" r="1.2" fill="#b87444" opacity="0.40"/><circle cx="723.5" cy="898.7" r="1.6" fill="#b87444" opacity="0.38"/><circle cx="757.1" cy="900.6" r="1.2" fill="#b87444" opacity="0.50"/><circle cx="674.9" cy="781.0" r="0.6" fill="#5a2e1a" opacity="0.31"/><circle cx="672.9" cy="877.1" r="1.3" fill="#5a2e1a" opacity="0.34"/><circle cx="629.2" cy="895.3" r="1.2" fill="#5a2e1a" opacity="0.41"/><circle cx="686.5" cy="782.8" r="1.1" fill="#5a2e1a" opacity="0.51"/><circle cx="618.3" cy="823.7" r="0.6" fill="#5a2e1a" opacity="0.35"/><circle cx="743.7" cy="768.2" r="0.8" fill="#c78a52" opacity="0.30"/><circle cx="651.1" cy="866.3" r="0.9" fill="#5a2e1a" opacity="0.34"/><circle cx="734.7" cy="782.2" r="1.2" fill="#5a2e1a" opacity="0.59"/><circle cx="729.2" cy="888.0" r="0.6" fill="#b87444" opacity="0.47"/><circle cx="697.0" cy="787.4" r="0.8" fill="#b87444" opacity="0.51"/><circle cx="638.8" cy="795.3" r="1.3" fill="#b87444" opacity="0.64"/><circle cx="641.5" cy="868.7" r="1.6" fill="#c78a52" opacity="0.43"/><circle cx="656.9" cy="894.2" r="0.9" fill="#c78a52" opacity="0.66"/><circle cx="623.0" cy="798.5" r="1.5" fill="#5a2e1a" opacity="0.46"/><circle cx="679.3" cy="896.8" r="1.3" fill="#b87444" opacity="0.35"/><circle cx="673.3" cy="860.9" r="0.6" fill="#c78a52" opacity="0.53"/><circle cx="664.9" cy="879.9" r="1.0" fill="#b87444" opacity="0.50"/><circle cx="739.8" cy="835.4" r="1.4" fill="#c78a52" opacity="0.62"/><circle cx="688.1" cy="768.4" r="1.5" fill="#b87444" opacity="0.51"/><circle cx="704.4" cy="785.5" r="0.8" fill="#c78a52" opacity="0.37"/><circle cx="627.6" cy="804.6" r="1.4" fill="#b87444" opacity="0.32"/><circle cx="775.9" cy="829.7" r="1.5" fill="#5a2e1a" opacity="0.46"/><circle cx="677.7" cy="814.6" r="0.9" fill="#5a2e1a" opacity="0.31"/><circle cx="729.1" cy="883.2" r="0.8" fill="#5a2e1a" opacity="0.44"/><circle cx="667.2" cy="894.1" r="1.3" fill="#c78a52" opacity="0.51"/><circle cx="747.9" cy="863.7" r="1.6" fill="#b87444" opacity="0.68"/><circle cx="704.5" cy="791.7" r="1.3" fill="#5a2e1a" opacity="0.62"/><circle cx="646.3" cy="892.6" r="1.5" fill="#c78a52" opacity="0.63"/><circle cx="673.9" cy="890.5" r="1.7" fill="#b87444" opacity="0.45"/><circle cx="678.7" cy="790.4" r="0.8" fill="#c78a52" opacity="0.33"/><circle cx="661.9" cy="830.6" r="0.6" fill="#5a2e1a" opacity="0.70"/><circle cx="766.8" cy="771.9" r="0.9" fill="#b87444" opacity="0.42"/><circle cx="638.4" cy="821.9" r="0.8" fill="#c78a52" opacity="0.46"/><circle cx="729.1" cy="871.6" r="1.8" fill="#c78a52" opacity="0.35"/><circle cx="618.2" cy="798.2" r="1.1" fill="#b87444" opacity="0.32"/><circle cx="634.5" cy="817.6" r="0.7" fill="#5a2e1a" opacity="0.41"/><circle cx="661.7" cy="840.7" r="1.1" fill="#b87444" opacity="0.53"/><circle cx="749.4" cy="775.7" r="1.3" fill="#c78a52" opacity="0.45"/><circle cx="773.5" cy="819.0" r="1.8" fill="#5a2e1a" opacity="0.52"/><circle cx="709.6" cy="825.1" r="1.2" fill="#5a2e1a" opacity="0.51"/><circle cx="709.8" cy="816.2" r="0.9" fill="#b87444" opacity="0.41"/><circle cx="771.8" cy="857.9" r="1.5" fill="#c78a52" opacity="0.31"/><circle cx="643.8" cy="771.0" r="0.8" fill="#b87444" opacity="0.46"/><circle cx="774.6" cy="775.3" r="1.7" fill="#5a2e1a" opacity="0.59"/><circle cx="644.9" cy="870.8" r="0.7" fill="#c78a52" opacity="0.67"/><circle cx="733.2" cy="830.6" r="1.8" fill="#c78a52" opacity="0.54"/><circle cx="619.5" cy="852.4" r="1.1" fill="#c78a52" opacity="0.64"/><circle cx="664.7" cy="786.7" r="1.0" fill="#c78a52" opacity="0.57"/><circle cx="683.2" cy="801.7" r="1.3" fill="#5a2e1a" opacity="0.45"/><circle cx="737.1" cy="879.1" r="0.8" fill="#5a2e1a" opacity="0.59"/><circle cx="642.6" cy="780.9" r="1.7" fill="#b87444" opacity="0.55"/><circle cx="665.2" cy="803.0" r="1.4" fill="#b87444" opacity="0.58"/><circle cx="633.5" cy="804.0" r="0.9" fill="#c78a52" opacity="0.50"/><circle cx="720.1" cy="792.4" r="1.4" fill="#b87444" opacity="0.32"/><circle cx="648.7" cy="824.5" r="1.3" fill="#c78a52" opacity="0.39"/><circle cx="650.0" cy="870.8" r="1.7" fill="#c78a52" opacity="0.52"/><circle cx="716.0" cy="817.2" r="1.2" fill="#c78a52" opacity="0.44"/><circle cx="690.5" cy="783.7" r="1.6" fill="#c78a52" opacity="0.48"/><circle cx="751.7" cy="882.3" r="1.5" fill="#5a2e1a" opacity="0.47"/><circle cx="646.3" cy="878.4" r="1.0" fill="#b87444" opacity="0.63"/><circle cx="709.6" cy="805.7" r="1.5" fill="#c78a52" opacity="0.47"/><circle cx="667.1" cy="778.6" r="1.7" fill="#c78a52" opacity="0.52"/><circle cx="678.8" cy="844.5" r="1.6" fill="#5a2e1a" opacity="0.42"/><circle cx="743.0" cy="775.7" r="0.9" fill="#b87444" opacity="0.54"/><circle cx="728.0" cy="834.3" r="1.5" fill="#5a2e1a" opacity="0.41"/><circle cx="624.7" cy="815.1" r="1.5" fill="#5a2e1a" opacity="0.66"/><circle cx="658.3" cy="826.7" r="1.3" fill="#b87444" opacity="0.67"/><circle cx="679.9" cy="877.4" r="1.0" fill="#5a2e1a" opacity="0.39"/><circle cx="694.5" cy="776.8" r="1.6" fill="#c78a52" opacity="0.45"/><circle cx="672.0" cy="819.3" r="0.8" fill="#b87444" opacity="0.45"/><circle cx="671.0" cy="786.7" r="1.3" fill="#c78a52" opacity="0.37"/><circle cx="739.9" cy="888.3" r="0.9" fill="#c78a52" opacity="0.39"/><circle cx="608.8" cy="787.2" r="1.0" fill="#c78a52" opacity="0.56"/><circle cx="748.4" cy="774.0" r="1.3" fill="#b87444" opacity="0.33"/><circle cx="766.1" cy="776.9" r="1.4" fill="#c78a52" opacity="0.34"/><circle cx="750.6" cy="824.1" r="1.5" fill="#5a2e1a" opacity="0.61"/><circle cx="695.5" cy="872.1" r="1.1" fill="#5a2e1a" opacity="0.62"/><circle cx="660.3" cy="784.1" r="1.2" fill="#b87444" opacity="0.33"/><circle cx="713.6" cy="771.5" r="1.5" fill="#b87444" opacity="0.44"/><circle cx="614.7" cy="830.1" r="1.2" fill="#c78a52" opacity="0.51"/><circle cx="730.8" cy="877.3" r="1.1" fill="#5a2e1a" opacity="0.67"/><circle cx="643.9" cy="787.7" r="1.4" fill="#b87444" opacity="0.37"/><circle cx="636.2" cy="824.5" r="1.0" fill="#c78a52" opacity="0.49"/><circle cx="734.7" cy="807.5" r="0.8" fill="#c78a52" opacity="0.66"/><circle cx="688.0" cy="877.1" r="1.0" fill="#c78a52" opacity="0.37"/><circle cx="638.6" cy="798.0" r="1.5" fill="#b87444" opacity="0.50"/><circle cx="680.6" cy="890.2" r="1.1" fill="#5a2e1a" opacity="0.55"/><circle cx="774.2" cy="842.1" r="1.6" fill="#5a2e1a" opacity="0.65"/><circle cx="769.0" cy="812.9" r="1.3" fill="#c78a52" opacity="0.49"/><path d="M582 756 C630 772 720 774 800 752" fill="none" stroke="#a8a396" stroke-width="6"/><path d="M582 756 C630 772 720 774 800 752" fill="none" stroke="#d0ccc0" stroke-width="1.5" stroke-dasharray="3 2"/></g></svg>
<div class="a" style="left:338px;top:1339px;width:1758px;height:2px;background:#0d0d0d"></div>
<div class="a" style="left:338px;top:1341px;width:1758px;height:68px;background:#272727"></div>
<div class="t m" style="left:348px;top:1353.21px;font-size:17.4px;color:#f4f4f4;">Click to add notes</div>
<div class="a" style="left:1px;top:1408px;width:2096px;height:2px;background:#111"></div>
<div class="a" style="left:1px;top:1410px;width:2095px;height:29px;background:linear-gradient(#454545,#3d3d3d);border-radius:0 0 10px 10px"></div>
<div class="t m" style="left:32.3px;top:1417.32px;font-size:16.1px;color:#dadada;">Slide 1 of 1</div>
<div class="t m" style="left:141px;top:1416.55px;font-size:17px;color:#dadada;">English (United States)</div>
<div class="t m" style="left:367.5px;top:1416.46px;font-size:17.1px;color:#dadada;">Accessibility: Investigate</div>
<div class="t m" style="left:1387.5px;top:1416.46px;font-size:17.1px;color:#dadada;">Notes</div>
<div class="t m" style="left:1484.5px;top:1416.63px;font-size:16.9px;color:#dadada;">Comments</div>
<div class="t m" style="left:1978.5px;top:1416.81px;font-size:16.7px;color:#dadada;">133%</div>
<svg class="a" style="left:0;top:0" width="2560" height="1440" viewBox="0 0 2560 1440"><circle cx="349.5" cy="1417" r="2.3" fill="none" stroke="#dadada" stroke-width="1.4"/><path d="M341 1420.5 L349.5 1422 L358 1420.5 M349.5 1422 V1427 L345 1434 M352 1428.5 L358.5 1434.5 M358.5 1428.5 L352 1434.5" fill="none" stroke="#dadada" stroke-width="1.5" stroke-linecap="round"/><path d="M1366 1421.5 L1369.8 1417 L1373.6 1421.5 Z" fill="#dadada"/><line x1="1360.5" y1="1423.5" x2="1379" y2="1423.5" stroke="#dadada" stroke-width="1.4" stroke-linecap="butt"/><line x1="1360.5" y1="1427" x2="1379" y2="1427" stroke="#dadada" stroke-width="1.4" stroke-linecap="butt"/><line x1="1360.5" y1="1430.5" x2="1379" y2="1430.5" stroke="#dadada" stroke-width="1.4" stroke-linecap="butt"/><path d="M1458.5 1419 A2 2 0 0 1 1460.5 1417 H1474.5 A2 2 0 0 1 1476.5 1419 V1427 A2 2 0 0 1 1474.5 1429 H1465.5 L1462 1433 V1429 H1460.5 A2 2 0 0 1 1458.5 1427 Z" fill="#e0e0e0"/><rect x="1579" y="1409.5" width="48.8" height="30.5" fill="#585858"/><rect x="1724.2" y="1409.5" width="47.7" height="30.5" fill="#585858"/><rect x="1594.5" y="1417.3" width="18" height="15" rx="1" fill="none" stroke="#f0f0f0" stroke-width="1.5"/><rect x="1594.5" y="1417.3" width="4" height="15" fill="#f0f0f0"/><rect x="1601.5" y="1420.5" width="8" height="4" fill="none" stroke="#f0f0f0" stroke-width="1.4"/><rect x="1598" y="1428.5" width="14.5" height="4" fill="#f0f0f0"/><rect x="1641.5" y="1417.5" width="8.5" height="5.5" rx="1" fill="#f0f0f0"/><rect x="1653" y="1417.5" width="8.5" height="5.5" rx="1" fill="#f0f0f0"/><rect x="1641.5" y="1426.5" width="8.5" height="5.5" rx="1" fill="#f0f0f0"/><rect x="1653" y="1426.5" width="8.5" height="5.5" rx="1" fill="#f0f0f0"/><path d="M1690 1418 H1697.5 L1699.2 1419.5 L1701 1418 H1708.5 V1432 H1690 Z M1699.2 1419.5 V1432" fill="none" stroke="#e0e0e0" stroke-width="1.4"/><line x1="1692.5" y1="1421.5" x2="1697" y2="1421.5" stroke="#e0e0e0" stroke-width="1" stroke-linecap="butt"/><line x1="1701.5" y1="1421.5" x2="1706" y2="1421.5" stroke="#e0e0e0" stroke-width="1" stroke-linecap="butt"/><line x1="1692.5" y1="1424.5" x2="1697" y2="1424.5" stroke="#e0e0e0" stroke-width="1" stroke-linecap="butt"/><line x1="1701.5" y1="1424.5" x2="1706" y2="1424.5" stroke="#e0e0e0" stroke-width="1" stroke-linecap="butt"/><line x1="1692.5" y1="1427.5" x2="1697" y2="1427.5" stroke="#e0e0e0" stroke-width="1" stroke-linecap="butt"/><line x1="1701.5" y1="1427.5" x2="1706" y2="1427.5" stroke="#e0e0e0" stroke-width="1" stroke-linecap="butt"/><path d="M1737.5 1417.3 H1756.5 M1739.5 1417.3 V1428 H1754.5 V1417.3 M1747 1428 V1433 M1743 1433.3 H1751" fill="none" stroke="#f0f0f0" stroke-width="1.6"/><line x1="1742.5" y1="1422.5" x2="1751.5" y2="1422.5" stroke="#f0f0f0" stroke-width="1.4" stroke-linecap="butt"/><line x1="1780.7" y1="1424.8" x2="1791.8" y2="1424.8" stroke="#f0f0f0" stroke-width="2.6" stroke-linecap="butt"/><rect x="1801.2" y="1422.5" width="133.3" height="5" rx="2.5" fill="#5f5f5f"/><circle cx="1873.9" cy="1424.5" r="10.5" fill="#9d9d9d"/><line x1="1944.2" y1="1424.8" x2="1955" y2="1424.8" stroke="#f0f0f0" stroke-width="2.6" stroke-linecap="butt"/><line x1="1949.6" y1="1419" x2="1949.6" y2="1430.6" stroke="#f0f0f0" stroke-width="2.6" stroke-linecap="butt"/><rect x="2049.3" y="1416.6" width="15.5" height="16.3" fill="none" stroke="#f0f0f0" stroke-width="1.4"/><path d="M2057 1418.5 V1422 M2055.5 1420 L2057 1418.5 L2058.5 1420 M2057 1427.5 V1431 M2055.5 1429.5 L2057 1431 L2058.5 1429.5 M2051 1424.8 H2054.5 M2052.5 1423.3 L2051 1424.8 L2052.5 1426.3 M2059.5 1424.8 H2063 M2061.5 1423.3 L2063 1424.8 L2061.5 1426.3" fill="none" stroke="#f0f0f0" stroke-width="1.1"/></svg>
<div class="a" style="left:37px;top:224px;width:254px;height:147px;border:4.5px solid #df6a55;border-radius:12px;background:#fff"></div>
<div class="t " style="left:14px;top:231.90px;font-size:16px;color:#e0e0e0;">1</div>
<svg class="a" style="left:0;top:0" width="2560" height="1440" viewBox="0 0 2560 1440"><use href="#robot" transform="translate(41.5,228.5) scale(0.1448) translate(-372,-301)"/></svg>
<div class="t " style="left:905.7px;top:46.30px;font-size:16.7px;color:#f0f0f0;">PowerPoint - Demo</div>
<div class="t " style="left:1056px;top:46.73px;font-size:16.2px;color:#b9b9b9;">— Saved to my Mac</div>
<div class="a" style="left:1668px;top:40px;width:373px;height:29px;background:#242424;border:1px solid #3a3a3a;border-radius:7px"></div>
<div class="t " style="left:1704px;top:47.58px;font-size:16.5px;color:#a5a5a5;font-weight:bold;">Search (Cmd + Ctrl + U)</div>
<div class="a" style="left:1689px;top:81px;width:109px;height:32px;background:#515151;border-radius:6px"></div>
<div class="t " style="left:1731.3px;top:89.09px;font-size:17.3px;color:#f2f2f2;-webkit-text-stroke:0.3px #f2f2f2">Record</div>
<div class="a" style="left:1812px;top:81px;width:140px;height:32px;background:#515151;border-radius:6px"></div>
<div class="t " style="left:1854.2px;top:88.75px;font-size:17.7px;color:#f2f2f2;-webkit-text-stroke:0.3px #f2f2f2">Comments</div>
<div class="a" style="left:1965px;top:81px;width:119px;height:32px;background:#c4501f;border-radius:6px"></div>
<div class="t " style="left:2007.2px;top:89.35px;font-size:17px;color:#ffffff;-webkit-text-stroke:0.4px #fff">Share</div>
<svg class="a" style="left:0;top:0" width="2560" height="120" viewBox="0 0 2560 120"><path d="M256.5 63.5 V51.5 L265.5 44.3 L274.5 51.5 V63.5 H268.5 V58.5 A3 3 0 0 0 262.5 58.5 V63.5 Z" fill="none" stroke="#e6e6e6" stroke-width="1.7" stroke-linejoin="round"/><path d="M292.5 47 A1.8 1.8 0 0 1 294.3 45.3 H306 L310.5 49.5 V62 A1.8 1.8 0 0 1 308.7 63.8 H294.3 A1.8 1.8 0 0 1 292.5 62 Z" fill="none" stroke="#e6e6e6" stroke-width="1.7"/><path d="M296.8 45.5 V51.3 H305.5 V45.5" fill="none" stroke="#e6e6e6" stroke-width="1.5"/><path d="M295.3 63.5 V56 H307.7 V63.5" fill="none" stroke="#e6e6e6" stroke-width="1.5"/><path d="M329.5 44.5 V51.5 H336.5" fill="none" stroke="#e6e6e6" stroke-width="1.6" stroke-linecap="round"/><path d="M330 51 L336 46 C341 43 346 45.5 346.5 50.5 C346.7 53 345.5 54.8 344 56.3 L332.5 65" fill="none" stroke="#e6e6e6" stroke-width="1.6" stroke-linecap="round"/><path d="M359.2 52.8 L362.7 57.4 L366.2 52.8" fill="none" stroke="#e6e6e6" stroke-width="1.7" stroke-linecap="round" stroke-linejoin="round"/><path d="M396.5 48.6 A8.8 8.8 0 1 0 399.1 55.1" fill="none" stroke="#6e6e6e" stroke-width="1.6"/><path d="M398.3 45.5 V50.3 H393.6 Z" fill="#6e6e6e" stroke="#6e6e6e" stroke-width="1" stroke-linejoin="round"/><circle cx="420.2" cy="54.6" r="1.9" fill="#e6e6e6"/><circle cx="426.8" cy="54.6" r="1.9" fill="#e6e6e6"/><circle cx="433.4" cy="54.6" r="1.9" fill="#e6e6e6"/><path d="M882.5 44.8 H893 L898.3 50 V64 H882.5 Z" fill="#f2f2f2"/><rect x="880.5" y="49" width="12" height="12" rx="1.5" fill="#d9826a"/><text x="883.3" y="58.7" font-size="9" fill="#f0d0c8" font-family="Liberation Sans" font-weight="bold">P</text><path d="M1207 52.5 L1211.75 57.7 L1216.5 52.5" fill="none" stroke="#b0b0b0" stroke-width="1.5" stroke-linecap="round" stroke-linejoin="round"/><circle cx="1684" cy="54.6" r="6.2" fill="none" stroke="#a8a8a8" stroke-width="1.6"/><path d="M1688.5 59.2 L1693.5 64" stroke="#a8a8a8" stroke-width="1.8" stroke-linecap="round"/><circle cx="2065.3" cy="52.5" r="3.2" fill="none" stroke="#e6e6e6" stroke-width="1.5"/><path d="M2060 59 H2070.5 A5.3 5.3 0 0 1 2060 59 Z" fill="none" stroke="#e6e6e6" stroke-width="1.5"/><path d="M2070.5 45 A1.5 1.5 0 0 1 2072 43.7 H2080 A1.5 1.5 0 0 1 2081.5 45 V49 A1.5 1.5 0 0 1 2080 50.5 H2074.5 L2072 53 V50.5 A1.5 1.5 0 0 1 2070.5 49 Z" fill="none" stroke="#e6e6e6" stroke-width="1.4"/><circle cx="1713.3" cy="97" r="9.3" fill="none" stroke="#f2f2f2" stroke-width="1.6"/><circle cx="1713.3" cy="97" r="6" fill="#f2f2f2"/><path d="M1826 90.5 A2.5 2.5 0 0 1 1828.5 88 H1843.5 A2.5 2.5 0 0 1 1846 90.5 V100 A2.5 2.5 0 0 1 1843.5 102.5 H1832.5 L1829 106.5 V102.5 H1828.5 A2.5 2.5 0 0 1 1826 100 Z" fill="none" stroke="#f2f2f2" stroke-width="1.5"/><path d="M1990 92 H1981.5 V104.5 H1997.5 V100" fill="none" stroke="#ffffff" stroke-width="1.5" stroke-linejoin="round"/><path d="M1985.5 100.5 C1986.5 94.5 1990.5 92 1995.5 92 V88.5 L2001 94 L1995.5 99.5 V96 C1991.5 96 1988 97.5 1985.5 100.5 Z" fill="none" stroke="#ffffff" stroke-width="1.5" stroke-linejoin="round"/><path d="M2064.8 94.5 L2069.3 99.5 L2073.8 94.5" fill="none" stroke="#ffffff" stroke-width="1.6" stroke-linecap="round" stroke-linejoin="round"/></svg>
<div class="a" style="left:176px;top:292px;width:299px;height:468px;background:radial-gradient(ellipse 150px 95px at 70px 30px,rgba(125,122,118,.8),rgba(125,122,118,0)),linear-gradient(90deg,#2b2a29 0%,#2d2c2b 52%,#474747 65%,#5f5f5f 77%,#686868 100%);border:1px solid #5a5a5a;border-radius:11px;box-shadow:0 6px 20px rgba(0,0,0,.35)"></div>
<div class="a" style="left:183px;top:460px;width:285px;height:29px;background:linear-gradient(90deg,#7b4a22,#8a5530 60%,#a9795a);border-radius:5px"></div>
<div class="t " style="left:195px;top:305.37px;font-size:17.8px;color:#e8e8e8;-webkit-text-stroke:0.3px #e8e8e8">Cut</div>
<div class="t" style="right:2108px;top:305.37px;font-size:17.8px;color:#8f8f8f;">⌘ X</div>
<div class="t " style="left:195px;top:334.57px;font-size:17.8px;color:#e8e8e8;-webkit-text-stroke:0.3px #e8e8e8">Copy</div>
<div class="t" style="right:2108px;top:334.57px;font-size:17.8px;color:#8f8f8f;">⌘ C</div>
<div class="t " style="left:195px;top:363.67px;font-size:17.8px;color:#e8e8e8;-webkit-text-stroke:0.3px #e8e8e8">Paste</div>
<div class="t" style="right:2108px;top:363.67px;font-size:17.8px;color:#8f8f8f;">⌘ V</div>
<div class="t " style="left:195px;top:393.57px;font-size:17.8px;color:#e8e8e8;-webkit-text-stroke:0.3px #e8e8e8">Select All</div>
<div class="t" style="right:2108px;top:393.57px;font-size:17.8px;color:#8f8f8f;">⌘ A</div>
<div class="t " style="left:195px;top:437.37px;font-size:17.8px;color:#e8e8e8;-webkit-text-stroke:0.3px #e8e8e8">New Slide</div>
<div class="t" style="right:2108px;top:437.37px;font-size:17.8px;color:#8f8f8f;">⌘ N</div>
<svg class="a" style="left:0;top:0" width="600" height="800" viewBox="0 0 600 800"><path d="M408.6 440.5 L402 447.2 H405.3 V452.3 H411.9 V447.2 H415.2 Z" fill="none" stroke="#8f8f8f" stroke-width="1.5" stroke-linejoin="round"/></svg>
<div class="t " style="left:195px;top:466.07px;font-size:17.8px;color:#ffffff;-webkit-text-stroke:0.3px #ffffff">Duplicate Slide</div>
<div class="t" style="right:2108px;top:466.07px;font-size:17.8px;color:#ffffff;">⌘ D</div>
<svg class="a" style="left:0;top:0" width="600" height="800" viewBox="0 0 600 800"><path d="M408.6 469.2 L402 475.9 H405.3 V481.0 H411.9 V475.9 H415.2 Z" fill="none" stroke="#ffffff" stroke-width="1.5" stroke-linejoin="round"/></svg>
<div class="t " style="left:195px;top:495.77px;font-size:17.8px;color:#e8e8e8;-webkit-text-stroke:0.3px #e8e8e8">Delete Slide</div>
<div class="t " style="left:195px;top:524.97px;font-size:17.8px;color:#e8e8e8;-webkit-text-stroke:0.3px #e8e8e8">Add Section</div>
<div class="t " style="left:195px;top:569.37px;font-size:17.8px;color:#e8e8e8;-webkit-text-stroke:0.3px #e8e8e8">Format Background...</div>
<div class="t " style="left:195px;top:613.17px;font-size:17.8px;color:#e8e8e8;-webkit-text-stroke:0.3px #e8e8e8">Hide Slide</div>
<div class="t " style="left:195px;top:656.87px;font-size:17.8px;color:#e8e8e8;-webkit-text-stroke:0.3px #e8e8e8">Zoom...</div>
<div class="t " style="left:195px;top:686.07px;font-size:17.8px;color:#e8e8e8;-webkit-text-stroke:0.3px #e8e8e8">Slide Show</div>
<div class="t" style="right:2126px;top:686.07px;font-size:17.8px;color:#8f8f8f;">⌘</div>
<svg class="a" style="left:0;top:0" width="600" height="800" viewBox="0 0 600 800"><path d="M451.5 688.7 V696.2 H439.5 M443.5 692.2 L439.5 696.2 L443.5 700.2" fill="none" stroke="#8f8f8f" stroke-width="1.6"/></svg>
<svg class="a" style="left:0;top:0" width="600" height="800" viewBox="0 0 600 800"><path d="M408.6 689.2 L402 695.9000000000001 H405.3 V701.0 H411.9 V695.9000000000001 H415.2 Z" fill="none" stroke="#8f8f8f" stroke-width="1.5" stroke-linejoin="round"/></svg>
<div class="t " style="left:195px;top:729.77px;font-size:17.8px;color:#e8e8e8;-webkit-text-stroke:0.3px #e8e8e8">New Comment</div>
<div class="t" style="right:2108px;top:729.77px;font-size:17.8px;color:#8f8f8f;">⌘ M</div>
<svg class="a" style="left:0;top:0" width="600" height="800" viewBox="0 0 600 800"><path d="M408.6 732.9 L402 739.6 H405.3 V744.6999999999999 H411.9 V739.6 H415.2 Z" fill="none" stroke="#8f8f8f" stroke-width="1.5" stroke-linejoin="round"/></svg>
<div class="a" style="left:195px;top:423.5px;width:261px;height:1px;background:rgba(255,255,255,.16)"></div>
<div class="a" style="left:195px;top:555.5px;width:261px;height:1px;background:rgba(255,255,255,.16)"></div>
<div class="a" style="left:195px;top:599.5px;width:261px;height:1px;background:rgba(255,255,255,.16)"></div>
<div class="a" style="left:195px;top:643px;width:261px;height:1px;background:rgba(255,255,255,.16)"></div>
<div class="a" style="left:195px;top:716.5px;width:261px;height:1px;background:rgba(255,255,255,.16)"></div>
<div class="a" style="left:132px;top:435px;width:379px;height:89px;border:9px solid #f00000"></div>
<svg class="a" style="left:0;top:0" width="600" height="600" viewBox="0 0 600 600"><path d="M253.5 462 L253.5 482.5 L258.3 478 L261.5 485.5 L264.8 484 L261.7 476.8 L268 476.3 Z" fill="#000" stroke="#fff" stroke-width="1.3" stroke-linejoin="round"/></svg>
<div class="a" style="left:2115px;top:895px;width:421px;height:410px;background:#1e1e1e;border:1px solid #4a4a4a;border-radius:12px;overflow:hidden"></div>
<div class="a" style="left:2116px;top:896px;width:419px;height:68px;background:#2a2a2a;border-radius:11px 11px 0 0"></div>
<div class="a" style="left:2116px;top:963px;width:419px;height:1px;background:#111"></div>
<div class="a" style="left:2141px;top:921px;width:16px;height:16px;background:#4b4b4b;border-radius:50%"></div>
<div class="a" style="left:2168px;top:921px;width:16px;height:16px;background:#4b4b4b;border-radius:50%"></div>
<div class="a" style="left:2194.5px;top:921px;width:16px;height:16px;background:#4b4b4b;border-radius:50%"></div>
<div class="t " style="left:2237px;top:920.45px;font-size:19px;color:#858585;font-weight:bold;">Robo Buddy</div>
<div class="a" style="left:2153.5px;top:977px;width:95px;height:96px;background:#393939;border-radius:6px"></div>
<div class="a" style="left:2137px;top:1076.5px;width:127px;height:22px;background:#464646;border-radius:4px"></div>
<div class="t " style="left:2142px;top:1079.38px;font-size:16.5px;color:#f0f0f0;">Robo Buddy.glb</div>
<div class="t " style="left:2282px;top:1079.38px;font-size:16.5px;color:#f0f0f0;">Robo Buddy.usdz</div>
<div class="a" style="left:2116px;top:1231px;width:419px;height:1px;background:#2f2f2f"></div>
<div class="a" style="left:2116px;top:1232px;width:419px;height:37px;background:#1e1e1e"></div>
<div class="a" style="left:2116px;top:1268px;width:419px;height:1px;background:#111"></div>
<div class="a" style="left:2116px;top:1269px;width:419px;height:35px;background:#2a2a2a;border-radius:0 0 11px 11px"></div>
<div class="t " style="left:2406px;top:1242.83px;font-size:15.5px;color:#e0e0e0;">Robo Buddy.glb</div>
<div class="t " style="left:2309.5px;top:1242.83px;font-size:15.5px;color:#c8c8c8;width:57px;overflow:hidden;-webkit-mask-image:linear-gradient(90deg,#000 75%,transparent)">Robo Buddy</div>
<div class="t " style="left:2258px;top:1279.83px;font-size:15.5px;color:#8a8a8a;">1.81 TB available</div>
<svg class="a" style="left:0;top:0" width="2560" height="1440" viewBox="0 0 2560 1440"><path d="M2451 923.5 L2457 930 L2451 936.5 M2457.5 923.5 L2463.5 930 L2457.5 936.5" fill="none" stroke="#7a7a7a" stroke-width="1.5"/><circle cx="2497.5" cy="926.5" r="7.6" fill="none" stroke="#7a7a7a" stroke-width="2"/><path d="M2503 932 L2509.5 938.5" stroke="#7a7a7a" stroke-width="2.4" stroke-linecap="round"/><path d="M2173 987.5 H2209 L2230 1008.5 V1061.3 A2 2 0 0 1 2228 1063.3 H2175 A2 2 0 0 1 2173 1061.3 Z" fill="#f1f1f1"/><path d="M2209 987.5 V1006.5 A2 2 0 0 0 2211 1008.5 H2230 Z" fill="#d8d8d8"/><defs><linearGradient id="glbSky" x1="0" y1="0" x2="0" y2="1"><stop offset="0" stop-color="#7fb0e8"/><stop offset="1" stop-color="#b9d3ee"/></linearGradient></defs><rect x="2184.7" y="1009.4" width="29" height="31" rx="6" fill="url(#glbSky)" stroke="#d8d8d8" stroke-width="0.8"/><path d="M2184.7 1022 H2213.7 V1026 H2184.7 Z" fill="#2a4f80"/><path d="M2184.7 1026 H2213.7 V1034.4 A6 6 0 0 1 2207.7 1040.4 H2190.7 A6 6 0 0 1 2184.7 1034.4 Z" fill="#e8eef4"/><path d="M2186 1033 C2190 1031 2195 1034 2200 1033" stroke="#7a8a9a" stroke-width="1.2" fill="none"/><path d="M2201.5 1030 H2214.5 L2219 1043 A2 2 0 0 1 2217 1045 H2199 A2 2 0 0 1 2197 1043 Z" fill="#dfe3e8" stroke="#8a9098" stroke-width="0.8"/><rect x="2202.5" y="1025" width="11.5" height="5.5" rx="1.5" fill="#1e1e1e"/><text x="2201.9" y="1056.3" font-size="11" fill="#6a6a6a" text-anchor="middle" font-family="Liberation Sans">GLB</text><path d="M2309 985.2 H2366 L2387 1006.2 V1062 A2 2 0 0 1 2385 1064 H2311 A2 2 0 0 1 2309 1062 Z" fill="#eeeeee"/><path d="M2366 985.2 V1004.2 A2 2 0 0 0 2368 1006.2 H2387 Z" fill="#d4d4d4"/><rect x="2132.5" y="1241" width="15.5" height="16" rx="2" fill="#b9bdc0"/><rect x="2134.5" y="1243" width="11.5" height="3" fill="#8a8f93"/><circle cx="2140" cy="1251" r="3.5" fill="none" stroke="#9aa0a4" stroke-width="1"/><path d="M2156.2 1246 L2159.5 1249.5 L2156.2 1253" fill="none" stroke="#b0b0b0" stroke-width="1.5"/><path d="M2194.8 1246 L2198.1000000000004 1249.5 L2194.8 1253" fill="none" stroke="#b0b0b0" stroke-width="1.5"/><path d="M2233.3 1246 L2236.6000000000004 1249.5 L2233.3 1253" fill="none" stroke="#b0b0b0" stroke-width="1.5"/><path d="M2271.9 1246 L2275.2000000000003 1249.5 L2271.9 1253" fill="none" stroke="#b0b0b0" stroke-width="1.5"/><path d="M2369.5 1246 L2372.8 1249.5 L2369.5 1253" fill="none" stroke="#b0b0b0" stroke-width="1.5"/><path d="M2170 1243 A1 1 0 0 1 2171 1241.5 H2176 L2178 1243.5 H2186.5 A1 1 0 0 1 2187.5 1244.5 V1256 A1 1 0 0 1 2186.5 1257 H2171 A1 1 0 0 1 2170 1256 Z" fill="#4fb2ea"/><path d="M2208.6 1243 A1 1 0 0 1 2209.6 1241.5 H2214.6 L2216.6 1243.5 H2225.1 A1 1 0 0 1 2226.1 1244.5 V1256 A1 1 0 0 1 2225.1 1257 H2209.6 A1 1 0 0 1 2208.6 1256 Z" fill="#4fb2ea"/><path d="M2247.6 1243 A1 1 0 0 1 2248.6 1241.5 H2253.6 L2255.6 1243.5 H2264.1 A1 1 0 0 1 2265.1 1244.5 V1256 A1 1 0 0 1 2264.1 1257 H2248.6 A1 1 0 0 1 2247.6 1256 Z" fill="#4fb2ea"/><path d="M2286.5 1243 A1 1 0 0 1 2287.5 1241.5 H2292.5 L2294.5 1243.5 H2303.0 A1 1 0 0 1 2304.0 1244.5 V1256 A1 1 0 0 1 2303.0 1257 H2287.5 A1 1 0 0 1 2286.5 1256 Z" fill="#4fb2ea"/><path d="M2385 1240.6 H2394.5 L2399 1245 V1257.8 H2385 Z" fill="#f0f0f0"/><rect x="2387.5" y="1247" width="8.5" height="5" fill="#6a8fb8"/><rect x="2409.6" y="1284" width="106" height="5" rx="2.5" fill="#3a3a3a"/><rect x="2409.6" y="1284" width="28" height="5" rx="2.5" fill="#505050"/><circle cx="2438" cy="1286.5" r="10" fill="#262626" stroke="#8e8e8e" stroke-width="1.7"/><use href="#robot" transform="translate(2348,1025) scale(0.072) translate(-700,-775)"/></svg>
</body></html>
